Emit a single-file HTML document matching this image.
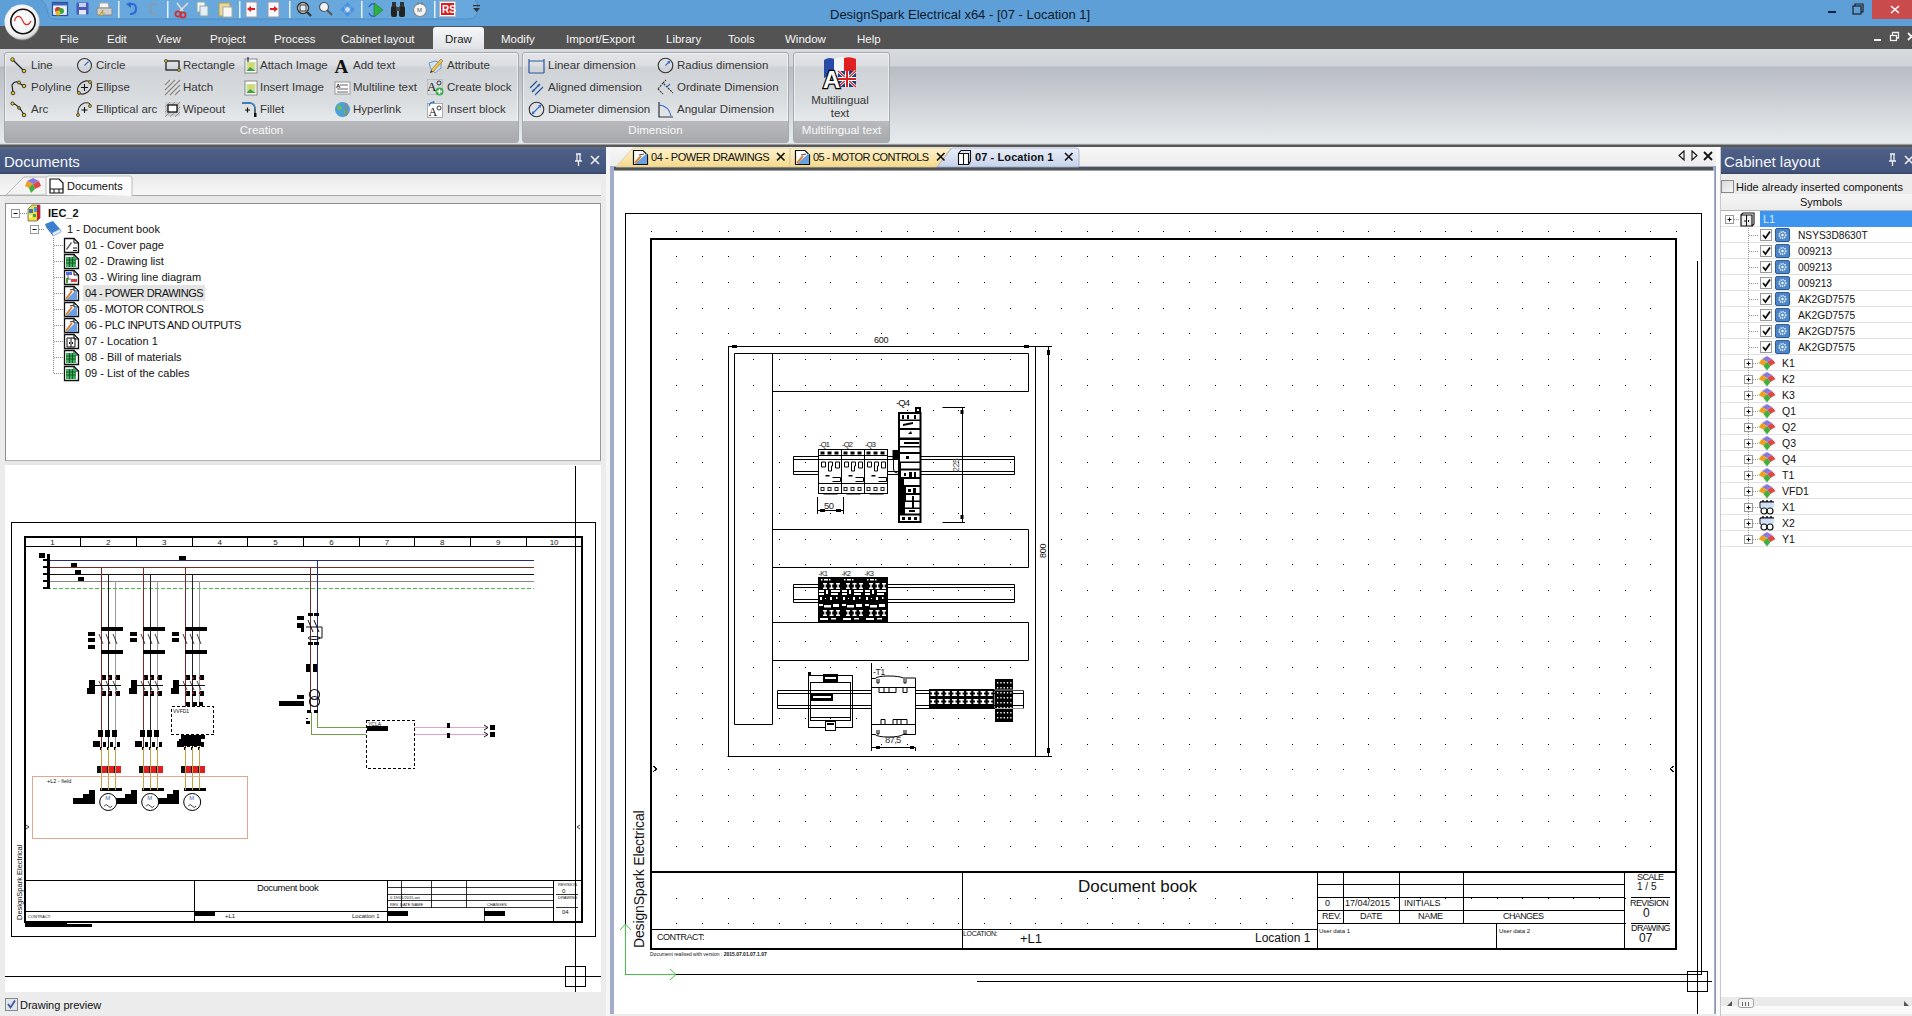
<!DOCTYPE html>
<html><head><meta charset="utf-8">
<style>
*{margin:0;padding:0;box-sizing:border-box}
html,body{width:1912px;height:1016px;overflow:hidden;background:#ececec;font-family:"Liberation Sans",sans-serif;font-size:12px;color:#000}
.a{position:absolute}
svg{position:absolute;overflow:visible}
#title{left:0;top:0;width:1912px;height:26px;background:#5f9fd7}
#menu{left:0;top:26px;width:1912px;height:23px;background:#535353;border-top:1px solid #4d5660}
.mi{position:absolute;top:33px;color:#f6f6f6;font-size:11.5px;line-height:13px;white-space:nowrap}
#ribbon{left:0;top:49px;width:1912px;height:96px;background:linear-gradient(#d7dadf 0,#d1d4da 17px,#b8bcc4 18px,#c9cdd2 45px,#e6ebed 93px,#d0d3d5 96px)}
.grp{position:absolute;top:52px;height:91px;border:1px solid #a6a9ad;border-radius:3px;background:linear-gradient(#e2e4e7 0,#dcdee1 12px,#cfd2d6 15px,#d9dcdf 45px,#e7eaec 70px);box-shadow:inset 0 0 0 1px rgba(255,255,255,.5)}
.glab{position:absolute;left:0;right:0;bottom:0;height:21px;background:linear-gradient(#b8babd,#a7a9ac);color:#f8f8f8;text-align:center;font-size:11.5px;line-height:18px}
.ri{position:absolute;font-size:11.5px;line-height:13px;color:#363636;white-space:nowrap}
.ic{position:absolute;width:17px;height:17px}
#sep{left:0;top:144px;width:1912px;height:3px;background:#575757;border-top:1px solid #9a9a9a}
.phdr{position:absolute;top:147px;height:27px;background:linear-gradient(#5a6a8c 0,#4e5f86 3px,#43557d 90%,#344463);color:#f4f6fa;font-size:15px;line-height:29px;padding-left:4px;white-space:nowrap}
.tr{position:absolute;font-size:11px;line-height:13px;white-space:nowrap;color:#111}
</style></head><body>
<!-- TITLE BAR -->
<div id="title" class="a"></div>

<svg width="450" height="22" style="left:40px;top:0">
 <path d="M1 -1 Q7 5 8 13 Q8.5 19 14 19 L428 19 Q438 19 438 9 Q438 2 434 -1 Z" fill="#68a8dd" stroke="#4f8ec6" stroke-width="1"/>
</svg>
<svg width="17" height="18" style="left:52px;top:1px"><rect x="0.5" y="1.5" width="15" height="13" fill="#e8f0f8" stroke="#2a50a0" stroke-width="1.2"/><rect x="1" y="2" width="15" height="2.5" fill="#3a64b8"/><circle cx="6" cy="9" r="3" fill="#d03030"/><circle cx="9" cy="10" r="3" fill="#40a040"/><circle cx="6" cy="12" r="2.5" fill="#e0c020"/></svg>
<svg width="14" height="18" style="left:76px;top:1px"><rect x="0.5" y="1.5" width="12" height="12" rx="1" fill="#4a58b8"/><rect x="3" y="2" width="7" height="4" fill="#c8d0f0"/><rect x="3" y="9" width="7" height="4.5" fill="#e8e8f0"/></svg>
<svg width="17" height="18" style="left:96px;top:1px"><path d="M4 2 L12 2 L13 7 L3 7Z" fill="#f4f4f4" stroke="#aaa"/><rect x="1" y="7" width="15" height="7" rx="1" fill="#cfcfcf" stroke="#888"/><path d="M3 15 L7 9 L6 12 L9 12" fill="#f0d020" stroke="#a08010" stroke-width=".6"/></svg>
<svg width="2" height="18" style="left:118px;top:1px"><rect x="0" y="0" width="1.5" height="17" fill="#e8f2fb"/></svg>
<svg width="12" height="18" style="left:126px;top:1px"><path d="M3 4 Q10 1 10 8 Q10 13 4 13" fill="none" stroke="#2a6ad0" stroke-width="2"/><path d="M0 3 L5 1 L5 7Z" fill="#2a6ad0"/></svg>
<svg width="12" height="18" style="left:148px;top:1px"><path d="M9 4 Q2 1 2 8 Q2 13 8 13" fill="none" stroke="#8a9aaa" stroke-width="2"/></svg>
<svg width="2" height="18" style="left:167px;top:1px"><rect x="0" y="0" width="1.5" height="17" fill="#e8f2fb"/></svg>
<svg width="15" height="18" style="left:174px;top:1px"><path d="M3 2 L9 10 M14 2 L6 10" stroke="#ddd" stroke-width="1.6"/><circle cx="4" cy="13" r="2.6" fill="none" stroke="#d03030" stroke-width="1.8"/><circle cx="9" cy="14" r="2.6" fill="none" stroke="#d03030" stroke-width="1.8"/></svg>
<svg width="13" height="18" style="left:196px;top:1px"><rect x="1" y="1" width="8" height="10" fill="#f4f4f4" stroke="#8aa"/><rect x="4" y="5" width="8" height="10" fill="#e4eef8" stroke="#8aa"/></svg>
<svg width="15" height="18" style="left:218px;top:1px"><rect x="1" y="2" width="11" height="13" fill="#e8d8a0" stroke="#b09a50"/><rect x="5" y="6" width="9" height="10" fill="#f8f8f0" stroke="#aaa"/></svg>
<svg width="2" height="18" style="left:239px;top:1px"><rect x="0" y="0" width="1.5" height="17" fill="#e8f2fb"/></svg>
<svg width="14" height="18" style="left:245px;top:1px"><rect x="1" y="1" width="11" height="15" fill="#fafafa" stroke="#99a"/><path d="M2 8 L6 5 V7 H10 V9 H6 V11Z" fill="#e02020"/></svg>
<svg width="14" height="18" style="left:267px;top:1px"><rect x="1" y="1" width="11" height="15" fill="#fafafa" stroke="#99a"/><path d="M11 8 L7 5 V7 H3 V9 H7 V11Z" fill="#e02020"/></svg>
<svg width="2" height="18" style="left:289px;top:1px"><rect x="0" y="0" width="1.5" height="17" fill="#e8f2fb"/></svg>
<svg width="16" height="18" style="left:296px;top:1px"><circle cx="7" cy="7" r="5.5" fill="#e8eef4" stroke="#333" stroke-width="1.4"/><path d="M11 11 L15 15" stroke="#333" stroke-width="2.2"/><rect x="4" y="4" width="6" height="6" fill="none" stroke="#333"/></svg>
<svg width="15" height="18" style="left:318px;top:1px"><circle cx="6" cy="6" r="4.5" fill="#eef2f6" stroke="#555" stroke-width="1.2"/><path d="M9 9 L14 14" stroke="#555" stroke-width="2"/></svg>
<svg width="17" height="18" style="left:339px;top:1px"><path d="M8.5 1 L12 5 H5Z M8.5 16 L12 12 H5Z M1 8.5 L5 5 V12Z M16 8.5 L12 5 V12Z" fill="#4a90e0"/><circle cx="8.5" cy="8.5" r="3" fill="#cde" stroke="#4a90e0"/></svg>
<svg width="2" height="18" style="left:361px;top:1px"><rect x="0" y="0" width="1.5" height="17" fill="#e8f2fb"/></svg>
<svg width="16" height="18" style="left:368px;top:1px"><path d="M6 2 L15 9 L6 16Z" fill="#30b040" stroke="#1a7020" stroke-width=".6"/><path d="M1 6 Q3 2 6 3 M1 12 Q3 16 6 15" fill="none" stroke="#2a6ad0" stroke-width="1.5"/></svg>
<svg width="16" height="18" style="left:390px;top:1px"><rect x="1" y="5" width="6" height="11" rx="2" fill="#222"/><rect x="9" y="5" width="6" height="11" rx="2" fill="#222"/><rect x="2" y="1" width="4" height="5" fill="#333"/><rect x="10" y="1" width="4" height="5" fill="#333"/><rect x="6" y="6" width="4" height="4" fill="#444"/></svg>
<svg width="16" height="18" style="left:412px;top:1px"><circle cx="8" cy="9" r="6.5" fill="#f4f4f4" stroke="#888" stroke-width="1.2"/><path d="M6 1 V4 M10 1 V4" stroke="#777" stroke-width="1.2"/><text x="5" y="11" font-size="6" fill="#555">M</text></svg>
<svg width="2" height="18" style="left:434px;top:1px"><rect x="0" y="0" width="1.5" height="17" fill="#e8f2fb"/></svg>
<svg width="18" height="18" style="left:439px;top:1px"><rect x="0.5" y="0.5" width="16" height="15" fill="#fff" stroke="#bbb"/><rect x="2" y="2" width="13" height="12" fill="#d82020"/><text x="3" y="12" font-family="Liberation Sans" font-weight="bold" font-size="10" fill="#fff">RS</text></svg>
<svg width="8" height="18" style="left:473px;top:1px"><rect x="0" y="4" width="7" height="1.2" fill="#333"/><path d="M0 7 L7 7 L3.5 11Z" fill="#333"/></svg>
<div class="a" style="left:830px;top:7px;font-size:13px;line-height:16px;color:#0e1a2a;white-space:nowrap">DesignSpark Electrical x64 - [07 - Location 1]</div>
<svg width="100" height="22" style="left:1812px;top:0">
 <rect x="16" y="11" width="8" height="2" fill="#0a2440"/>
 <rect x="41" y="6" width="8" height="8" fill="none" stroke="#222" stroke-width="1.2"/>
 <path d="M43 6 V4 H51 V12 H49" fill="none" stroke="#222" stroke-width="1.2"/>
 <rect x="60" y="0" width="40" height="19" fill="#c94b4b"/>
 <path d="M79 6 L87 13 M87 6 L79 13" stroke="#fff" stroke-width="1.6"/>
</svg>
<!-- MENU -->
<div id="menu" class="a"></div>
<div class="a" style="left:433px;top:27px;width:51px;height:23px;background:linear-gradient(#f6f7f9,#dfe1e5);border-radius:3px 3px 0 0"></div>
<div class="mi" style="left:60px">File</div>
<div class="mi" style="left:107px">Edit</div>
<div class="mi" style="left:156px">View</div>
<div class="mi" style="left:210px">Project</div>
<div class="mi" style="left:274px">Process</div>
<div class="mi" style="left:341px">Cabinet layout</div>
<div class="mi" style="left:445px;color:#222">Draw</div>
<div class="mi" style="left:501px">Modify</div>
<div class="mi" style="left:566px">Import/Export</div>
<div class="mi" style="left:666px">Library</div>
<div class="mi" style="left:728px">Tools</div>
<div class="mi" style="left:785px">Window</div>
<div class="mi" style="left:857px">Help</div>
<svg width="50" height="16" style="left:1870px;top:30px">
 <rect x="4" y="9" width="7" height="2" fill="#f0f0f0"/>
 <rect x="20.5" y="5.5" width="6" height="5" fill="none" stroke="#f0f0f0" stroke-width="1.3"/>
 <path d="M22.5 5 V2.5 H28.5 V8 H26.5" fill="none" stroke="#f0f0f0" stroke-width="1.3"/>
 <path d="M38 3 L45 10 M45 3 L38 10" stroke="#f0f0f0" stroke-width="1.8"/>
</svg>
<svg width="80" height="50" style="left:0;top:0">
 <defs><radialGradient id="lg" cx="45%" cy="40%" r="60%"><stop offset="0" stop-color="#fff"/><stop offset="0.8" stop-color="#f2f2f2"/><stop offset="1" stop-color="#cfcfcf"/></radialGradient></defs>
 <circle cx="22.5" cy="23" r="17.5" fill="#9a9a9a" opacity=".45"/>
 <circle cx="22" cy="22" r="17.5" fill="url(#lg)"/>
 <circle cx="23" cy="21.5" r="12.2" fill="none" stroke="#111" stroke-width="1.6"/>
 <path d="M14.5 21 C16.5 14.5 20.5 15.5 22.5 20.5 C24.5 25.5 28.5 26.5 31 21" fill="none" stroke="#d03030" stroke-width="1.2"/>
</svg>
<!-- RIBBON -->
<div id="ribbon" class="a"></div>
<div class="grp" style="left:4px;width:515px"><div class="glab">Creation</div></div>
<div class="grp" style="left:522px;width:267px"><div class="glab">Dimension</div></div>
<div class="grp" style="left:793px;width:97px"><div class="glab">Multilingual text</div></div>
<svg width="17" height="17" style="left:10px;top:57px"><path d="M2 2 L14 14" stroke="#222" stroke-width="1.2"/><circle cx="2.5" cy="2.5" r="1.8" fill="#f0c020" stroke="#222" stroke-width=".8"/><circle cx="14" cy="14" r="1.8" fill="#f0c020" stroke="#222" stroke-width=".8"/></svg><div class="ri" style="left:31px;top:59px">Line</div>
<svg width="17" height="17" style="left:10px;top:79px"><path d="M3 14 L2 6 Q5 1 9 4 L14 7" fill="none" stroke="#222" stroke-width="1.2"/><circle cx="3" cy="14" r="1.8" fill="#f0c020" stroke="#222" stroke-width=".8"/><circle cx="14" cy="7" r="1.8" fill="#f0c020" stroke="#222" stroke-width=".8"/><circle cx="9" cy="3.5" r="1.5" fill="#f0c020" stroke="#222" stroke-width=".8"/></svg><div class="ri" style="left:31px;top:81px">Polyline</div>
<svg width="17" height="17" style="left:10px;top:101px"><path d="M2 2 Q9 4 14 14" fill="none" stroke="#222" stroke-width="1.2"/><circle cx="2.5" cy="2.5" r="1.6" fill="#f0c020" stroke="#222" stroke-width=".8"/><circle cx="14" cy="14" r="1.8" fill="#f0c020" stroke="#222" stroke-width=".8"/><circle cx="9" cy="7" r="1.4" fill="#f0c020" stroke="#222" stroke-width=".8"/></svg><div class="ri" style="left:31px;top:103px">Arc</div>
<svg width="17" height="17" style="left:76px;top:57px"><circle cx="8.5" cy="8.5" r="7" fill="none" stroke="#333" stroke-width="1.1"/><path d="M8.5 8.5 L12.5 4.5" stroke="#2b6fd0" stroke-width="1.1"/></svg><div class="ri" style="left:96px;top:59px">Circle</div>
<svg width="17" height="17" style="left:76px;top:79px"><ellipse cx="8.5" cy="8.5" rx="8" ry="5.5" transform="rotate(-40 8.5 8.5)" fill="none" stroke="#333" stroke-width="1.1"/><path d="M8.5 5 V12 M5 8.5 H12" stroke="#111" stroke-width="1.1"/><circle cx="3" cy="14" r="1.5" fill="#f0c020" stroke="#222" stroke-width=".7"/><circle cx="14" cy="3" r="1.5" fill="#f0c020" stroke="#222" stroke-width=".7"/></svg><div class="ri" style="left:96px;top:81px">Ellipse</div>
<svg width="17" height="17" style="left:76px;top:101px"><path d="M2 14 Q1 5 8 2 Q14 1 14 4" fill="none" stroke="#333" stroke-width="1.1"/><path d="M8.5 6 V12 M5.5 9 H11.5" stroke="#111" stroke-width="1.1"/><circle cx="2" cy="14" r="1.5" fill="#f0c020" stroke="#222" stroke-width=".7"/><circle cx="14" cy="5" r="1.5" fill="#f0c020" stroke="#222" stroke-width=".7"/></svg><div class="ri" style="left:96px;top:103px">Elliptical arc</div>
<svg width="17" height="17" style="left:164px;top:57px"><rect x="2" y="4" width="13" height="9" fill="none" stroke="#222" stroke-width="1.3"/><circle cx="2" cy="4" r="1.5" fill="#f0c020" stroke="#222" stroke-width=".7"/><circle cx="15" cy="13" r="1.5" fill="#f0c020" stroke="#222" stroke-width=".7"/></svg><div class="ri" style="left:183px;top:59px">Rectangle</div>
<svg width="17" height="17" style="left:164px;top:79px"><rect x="1" y="1" width="15" height="14" fill="#ddd"/><path d="M1 6 L6 1 M1 11 L11 1 M1 16 L16 1 M6 16 L16 6 M11 16 L16 11" stroke="#888" stroke-width="1.2"/></svg><div class="ri" style="left:183px;top:81px">Hatch</div>
<svg width="17" height="17" style="left:164px;top:101px"><rect x="1" y="1" width="15" height="14" fill="#ccc"/><path d="M1 6 L6 1 M1 11 L11 1 M1 16 L16 1 M6 16 L16 6 M11 16 L16 11" stroke="#999" stroke-width="1"/><rect x="4" y="4" width="9" height="7" fill="#fff" stroke="#111" stroke-width="1.3"/></svg><div class="ri" style="left:183px;top:103px">Wipeout</div>
<svg width="17" height="17" style="left:242px;top:57px"><rect x="3" y="2" width="12" height="14" fill="#fff" stroke="#888"/><rect x="4.5" y="5" width="9" height="9" fill="#bfe0a0"/><circle cx="9" cy="8" r="2" fill="#f0d040"/><path d="M4.5 14 L8 10 L13.5 14Z" fill="#4a9a40"/><path d="M6 0 V5" stroke="#333" stroke-width="1.3"/></svg><div class="ri" style="left:260px;top:59px">Attach Image</div>
<svg width="17" height="17" style="left:242px;top:79px"><rect x="3" y="2" width="12" height="14" fill="#fff" stroke="#888"/><rect x="4.5" y="5" width="9" height="9" fill="#bfe0a0"/><circle cx="9" cy="8" r="2" fill="#f0d040"/><path d="M4.5 14 L8 10 L13.5 14Z" fill="#4a9a40"/></svg><div class="ri" style="left:260px;top:81px">Insert Image</div>
<svg width="17" height="17" style="left:241px;top:101px"><path d="M1 2 H8 Q14 2 14 8 V16" fill="none" stroke="#222" stroke-width="1.3"/><path d="M1 2 H8 Q14 2 14 8" fill="none" stroke="#3a8ad8" stroke-width="1.3"/><path d="M4 9 H9 M6.5 6.5 V11.5" stroke="#111" stroke-width="1.2"/><rect x="13" y="12" width="2.5" height="4" fill="#111"/></svg><div class="ri" style="left:260px;top:103px">Fillet</div>
<svg width="17" height="17" style="left:334px;top:57px"><text x="0.5" y="15.5" font-family="Liberation Serif" font-size="19" font-weight="bold" fill="#111">A</text></svg><div class="ri" style="left:353px;top:59px">Add text</div>
<svg width="17" height="17" style="left:334px;top:79px"><rect x="1" y="3" width="15" height="12" fill="#fff" stroke="#999"/><text x="2" y="9" font-size="6" font-weight="bold" fill="#111">A</text><path d="M6 6 H14 M3 10 H14 M3 13 H14" stroke="#666"/></svg><div class="ri" style="left:353px;top:81px">Multiline text</div>
<svg width="17" height="17" style="left:334px;top:101px"><circle cx="8.5" cy="8.5" r="7.5" fill="#4aa0d8"/><path d="M3 5 Q6 3 8 6 Q7 10 4 9Z M10 9 Q13 8 14 11 Q12 15 10 13Z" fill="#6cc050"/><path d="M12 2 V15" stroke="#888" stroke-width="2"/></svg><div class="ri" style="left:353px;top:103px">Hyperlink</div>
<svg width="17" height="17" style="left:427px;top:57px"><path d="M2 6 L8 4 L14 6 L14 11 Q8 16 8 16 Q2 11 2 6Z" fill="#cfe3f5" stroke="#6f94b8"/><path d="M4 13 L14 2 L16 4 L6 15 Z" fill="#f2c24a" stroke="#8a6a2a" stroke-width=".6"/><path d="M4 13 L3 16 L6 15Z" fill="#333"/></svg><div class="ri" style="left:447px;top:59px">Attribute</div>
<svg width="17" height="17" style="left:427px;top:79px"><text x="0" y="12" font-family="Liberation Serif" font-size="13" fill="#111">A</text><circle cx="12" cy="4" r="2" fill="none" stroke="#111" stroke-width=".8"/><rect x="0.5" y="0.5" width="15" height="15" fill="none" stroke="#aaa" stroke-width=".6"/><circle cx="12.5" cy="12.5" r="4" fill="#3aae4a"/><path d="M12.5 10 V15 M10 12.5 H15" stroke="#fff" stroke-width="1.4"/></svg><div class="ri" style="left:447px;top:81px">Create block</div>
<svg width="17" height="17" style="left:427px;top:101px"><rect x="0.5" y="2.5" width="15" height="14" fill="#fff" stroke="#999" stroke-width=".8"/><text x="1.5" y="15" font-family="Liberation Serif" font-size="12" fill="#111">A</text><circle cx="12" cy="7" r="2" fill="none" stroke="#111" stroke-width=".8"/><path d="M2 5 Q3 1 7 1" fill="none" stroke="#2a70c8" stroke-width="1.2"/><path d="M6 0 L8 1 L6 3" fill="#2a70c8"/></svg><div class="ri" style="left:447px;top:103px">Insert block</div>
<svg width="17" height="17" style="left:528px;top:57px"><path d="M1 2 V16 M16 2 V16 M1 16 H16 M1 4 H16" stroke="#2a5aa0" stroke-width="1.2" fill="none"/></svg><div class="ri" style="left:548px;top:59px">Linear dimension</div>
<svg width="17" height="17" style="left:528px;top:79px"><path d="M2 9 L9 2 M7 16 L15 8 M4 13 L12 5" stroke="#2a5aa0" stroke-width="1.2" fill="none"/><path d="M4 13 L5 10 L7 12Z M12 5 L11 8 L9 6Z" fill="#2a5aa0"/></svg><div class="ri" style="left:548px;top:81px">Aligned dimension</div>
<svg width="17" height="17" style="left:528px;top:101px"><circle cx="8.5" cy="8.5" r="7.3" fill="none" stroke="#333" stroke-width="1.1"/><path d="M4 13 L13 4" stroke="#2a6ad0" stroke-width="1.1"/><path d="M4 13 L4.5 10 L7 12.5Z M13 4 L12.5 7 L10 4.5Z" fill="#2a6ad0"/></svg><div class="ri" style="left:548px;top:103px">Diameter dimension</div>
<svg width="17" height="17" style="left:657px;top:57px"><circle cx="8.5" cy="8.5" r="7.3" fill="none" stroke="#333" stroke-width="1.1"/><path d="M8.5 8.5 L12.5 4.5" stroke="#2a6ad0" stroke-width="1.1"/><path d="M13 4 L12.5 7 L10 4.5Z" fill="#2a6ad0"/></svg><div class="ri" style="left:677px;top:59px">Radius dimension</div>
<svg width="17" height="17" style="left:657px;top:79px"><path d="M1 10 L6 4 L16 14 M6 4 L9 1 M1 10 L6 15" stroke="#333" stroke-width="1.1" fill="none" stroke-dasharray="2 1"/><path d="M10 8 L13 5" stroke="#2a6ad0" stroke-width="1.1"/></svg><div class="ri" style="left:677px;top:81px">Ordinate Dimension</div>
<svg width="17" height="17" style="left:657px;top:101px"><path d="M2 1 V16 H16" stroke="#333" stroke-width="1.2" fill="none"/><path d="M2 4 Q12 5 14 15" stroke="#2a6ad0" stroke-width="1.1" fill="none"/></svg><div class="ri" style="left:677px;top:103px">Angular Dimension</div>
<svg width="40" height="36" style="left:822px;top:56px">
<path d="M2 4 Q8 0 14 4 L14 22 Q8 18 2 22Z" fill="#2a4aa8"/><path d="M12 3 Q20 -1 28 3 L28 20 Q20 16 12 20Z" fill="#f4f4f4"/><path d="M22 2 Q28 0 34 3 L34 18 Q28 15 22 18Z" fill="#e02020"/>
<rect x="16" y="15" width="18" height="16" fill="#1a3a8a"/><path d="M16 15 L34 31 M34 15 L16 31" stroke="#fff" stroke-width="3"/><path d="M16 15 L34 31 M34 15 L16 31" stroke="#d02020" stroke-width="1.2"/><path d="M25 15 V31 M16 23 H34" stroke="#fff" stroke-width="4"/><path d="M25 15 V31 M16 23 H34" stroke="#d02020" stroke-width="2"/>
<text x="1" y="32" font-family="Liberation Sans" font-size="24" font-weight="bold" fill="#fff" stroke="#000" stroke-width="2.4" paint-order="stroke">A</text></svg>
<div class="ri" style="left:808px;top:94px;width:64px;text-align:center;line-height:13px">Multilingual<br>text</div>
<div id="sep" class="a"></div>
<div class="a" style="left:0;top:147px;width:610px;height:869px;background:#ececec"></div>
<div class="phdr" style="left:0;width:606px">Documents</div>
<svg width="30" height="16" style="left:568px;top:152px"><path d="M8 2 H13 M9 2 V9 H12 V2 M7 9 H14 M10.5 9 V14" stroke="#f0f0f0" stroke-width="1.3" fill="none"/><path d="M23 4 L31 12 M31 4 L23 12" stroke="#f0f0f0" stroke-width="1.6"/></svg>
<div class="a" style="left:0;top:174px;width:606px;height:22px;background:linear-gradient(#e9e9e9,#f7f7f7);border-bottom:1px solid #a9a9a9"></div>
<svg width="140" height="24" style="left:0;top:174px"><path d="M6 21 L24 3 H50 L50 21Z" fill="#f3f3f3" stroke="#b8b8b8"/><path d="M46 21 V4 Q46 2 49 2 H130 Q132 2 132 5 V22" fill="#fbfbfb" stroke="#bdbdbd"/><g transform="translate(25,4)"><path d="M8 0 L14 3 L8 6 L2 3Z" fill="#8a7ae0"/><path d="M14 3 L16 8 L10 11 L8 6Z" fill="#e04848"/><path d="M2 3 L8 6 L6 11 L0 8Z" fill="#f0a020"/><path d="M8 6 L10 11 L6 15 L4 10Z" fill="#40b040"/></g><g transform="translate(49,4)"><path d="M1 1 H10 L14 5 V15 H1Z" fill="#fff" stroke="#111" stroke-width="1.2"/><path d="M1 11 H14 M5 11 V15 M10 11 V15" stroke="#111" stroke-width="1"/></g></svg>
<div class="tr" style="left:67px;top:180px">Documents</div>
<div class="a" style="left:5px;top:196px;width:596px;height:7px;background:#e8e8e8"></div>
<div class="a" style="left:5px;top:203px;width:596px;height:258px;background:#fff;border:1px solid #8e8e8e;border-right-color:#9a9a9a;border-bottom-color:#b0b0b0"></div>
<div class="a" style="left:5px;top:461px;width:596px;height:4px;background:#e6e6e6"></div>
<svg width="100" height="180" style="left:0;top:200px"><rect x="11.5" y="9.5" width="8" height="8" fill="#fff" stroke="#999"/><path d="M13.5 13.5 H17.5" stroke="#111"/><path d="M20 13.5 H27" stroke="#888" stroke-dasharray="1 1"/><rect x="30.5" y="25.5" width="8" height="8" fill="#fff" stroke="#999"/><path d="M32.5 29.5 H36.5" stroke="#111"/><path d="M39 29.5 H45" stroke="#888" stroke-dasharray="1 1"/><path d="M53.5 38 V173.5" stroke="#888" stroke-dasharray="1 1"/><path d="M54 45.5 H63" stroke="#888" stroke-dasharray="1 1"/><path d="M54 61.5 H63" stroke="#888" stroke-dasharray="1 1"/><path d="M54 77.5 H63" stroke="#888" stroke-dasharray="1 1"/><path d="M54 93.5 H63" stroke="#888" stroke-dasharray="1 1"/><path d="M54 109.5 H63" stroke="#888" stroke-dasharray="1 1"/><path d="M54 125.5 H63" stroke="#888" stroke-dasharray="1 1"/><path d="M54 141.5 H63" stroke="#888" stroke-dasharray="1 1"/><path d="M54 157.5 H63" stroke="#888" stroke-dasharray="1 1"/><path d="M54 173.5 H63" stroke="#888" stroke-dasharray="1 1"/><g transform="translate(28,5)"><path d="M0 4 L4 0 H12 V13 L9 16 H0Z" fill="#f0e040" stroke="#333" stroke-width=".6"/><rect x="1" y="4" width="4" height="4" fill="#3a70d0"/><rect x="6" y="2" width="5" height="5" fill="#3aa0e0"/><path d="M9 0 H12 V13 L9 16Z" fill="#c82030"/><rect x="1" y="10" width="3" height="3" fill="#f8f8a0"/><rect x="5" y="9" width="3" height="3" fill="#40a050"/></g><g transform="translate(45,21)"><path d="M0 3 L8 0 L15 8 L7 12Z" fill="#3a80d0"/><path d="M7 12 L15 8 L16 11 L8 15Z" fill="#e8eef8" stroke="#5a8ad0" stroke-width=".6"/><path d="M0 3 L7 12 L8 15 L1 6Z" fill="#2a60b0"/></g></svg>
<div class="a" style="left:83px;top:285px;width:122px;height:16px;background:#e4e4e4"></div>
<div class="tr" style="left:48px;top:207px;font-weight:bold">IEC_2</div>
<div class="tr" style="left:67px;top:223px">1 - Document book</div>
<svg width="17" height="17" style="left:63px;top:237px"><path d="M1.5 1.5 H11 L15.5 6 V15.5 H1.5Z" fill="#fff" stroke="#111" stroke-width="1.3" stroke-linejoin="miter"/><path d="M11 1.5 V6 H15.5" fill="none" stroke="#111" stroke-width="1"/><path d="M3 12 L8 5 L9 6 L4 13Z" fill="#555"/><path d="M10 11 H14 M10 13.5 H14" stroke="#111"/></svg>
<div class="tr" style="left:85px;top:239px;">01 - Cover page</div>
<svg width="17" height="17" style="left:63px;top:253px"><path d="M1.5 1.5 H11 L15.5 6 V15.5 H1.5Z" fill="#fff" stroke="#111" stroke-width="1.3" stroke-linejoin="miter"/><path d="M11 1.5 V6 H15.5" fill="none" stroke="#111" stroke-width="1"/><rect x="3" y="4" width="10" height="10" fill="#3cae5a"/><path d="M3 7 H13 M3 10 H13 M6.5 4 V14 M9.5 4 V14" stroke="#0d4a20" stroke-width=".8"/></svg>
<div class="tr" style="left:85px;top:255px;">02 - Drawing list</div>
<svg width="17" height="17" style="left:63px;top:269px"><path d="M1.5 1.5 H11 L15.5 6 V15.5 H1.5Z" fill="#fff" stroke="#111" stroke-width="1.3" stroke-linejoin="miter"/><path d="M11 1.5 V6 H15.5" fill="none" stroke="#111" stroke-width="1"/><rect x="3" y="3" width="6" height="3" fill="#5a6ad8"/><rect x="8" y="10" width="6" height="3" fill="#e04040"/><rect x="3" y="9" width="2" height="5" fill="#40a040"/><path d="M5 6 V10 H8" stroke="#333" fill="none" stroke-width=".8"/></svg>
<div class="tr" style="left:85px;top:271px;">03 - Wiring line diagram</div>
<svg width="17" height="17" style="left:63px;top:285px"><path d="M1.5 1.5 H11 L15.5 6 V15.5 H1.5Z" fill="#fff" stroke="#111" stroke-width="1.3" stroke-linejoin="miter"/><path d="M11 1.5 V6 H15.5" fill="none" stroke="#111" stroke-width="1"/><path d="M3 15 L14 4 V15Z" fill="#6aa0e0"/><path d="M3 14 L9 6" stroke="#e08030" stroke-width="2"/><path d="M7 5 L11 4" stroke="#333" stroke-width="1.2"/></svg>
<div class="tr" style="left:85px;top:287px; letter-spacing:-0.45px">04 - POWER DRAWINGS</div>
<svg width="17" height="17" style="left:63px;top:301px"><path d="M1.5 1.5 H11 L15.5 6 V15.5 H1.5Z" fill="#fff" stroke="#111" stroke-width="1.3" stroke-linejoin="miter"/><path d="M11 1.5 V6 H15.5" fill="none" stroke="#111" stroke-width="1"/><path d="M3 15 L14 4 V15Z" fill="#6aa0e0"/><path d="M3 14 L9 6" stroke="#e08030" stroke-width="2"/><path d="M7 5 L11 4" stroke="#333" stroke-width="1.2"/></svg>
<div class="tr" style="left:85px;top:303px; letter-spacing:-0.45px">05 - MOTOR CONTROLS</div>
<svg width="17" height="17" style="left:63px;top:317px"><path d="M1.5 1.5 H11 L15.5 6 V15.5 H1.5Z" fill="#fff" stroke="#111" stroke-width="1.3" stroke-linejoin="miter"/><path d="M11 1.5 V6 H15.5" fill="none" stroke="#111" stroke-width="1"/><path d="M3 15 L14 4 V15Z" fill="#6aa0e0"/><path d="M3 14 L9 6" stroke="#e08030" stroke-width="2"/><path d="M7 5 L11 4" stroke="#333" stroke-width="1.2"/></svg>
<div class="tr" style="left:85px;top:319px; letter-spacing:-0.45px">06 - PLC INPUTS AND OUTPUTS</div>
<svg width="17" height="17" style="left:63px;top:333px"><path d="M1.5 1.5 H11 L15.5 6 V15.5 H1.5Z" fill="#fff" stroke="#111" stroke-width="1.3" stroke-linejoin="miter"/><path d="M11 1.5 V6 H15.5" fill="none" stroke="#111" stroke-width="1"/><path d="M4 5 H12 V14 H4Z M8 5 V14" fill="none" stroke="#111" stroke-width="1"/><rect x="6" y="9" width="1" height="2" fill="#111"/><rect x="9" y="9" width="1" height="2" fill="#111"/></svg>
<div class="tr" style="left:85px;top:335px;">07 - Location 1</div>
<svg width="17" height="17" style="left:63px;top:349px"><path d="M1.5 1.5 H11 L15.5 6 V15.5 H1.5Z" fill="#fff" stroke="#111" stroke-width="1.3" stroke-linejoin="miter"/><path d="M11 1.5 V6 H15.5" fill="none" stroke="#111" stroke-width="1"/><rect x="3" y="4" width="10" height="10" fill="#3cae5a"/><path d="M3 7 H13 M3 10 H13 M6.5 4 V14 M9.5 4 V14" stroke="#0d4a20" stroke-width=".8"/></svg>
<div class="tr" style="left:85px;top:351px;">08 - Bill of materials</div>
<svg width="17" height="17" style="left:63px;top:365px"><path d="M1.5 1.5 H11 L15.5 6 V15.5 H1.5Z" fill="#fff" stroke="#111" stroke-width="1.3" stroke-linejoin="miter"/><path d="M11 1.5 V6 H15.5" fill="none" stroke="#111" stroke-width="1"/><rect x="3" y="4" width="10" height="10" fill="#3cae5a"/><path d="M3 7 H13 M3 10 H13 M6.5 4 V14 M9.5 4 V14" stroke="#0d4a20" stroke-width=".8"/></svg>
<div class="tr" style="left:85px;top:367px;">09 - List of the cables</div>
<div class="a" style="left:5px;top:465px;width:596px;height:527px;background:#fff"></div>
<div class="a" style="left:5px;top:465px;width:596px;height:527px;overflow:hidden">
<svg width="1912" height="1016" style="left:-5px;top:-465px">
<g fill="none" stroke="#000" shape-rendering="crispEdges">
<rect x="11.5" y="522.5" width="584" height="414"/>
<rect x="25" y="537" width="557" height="385" stroke-width="2"/>
<path d="M25 546.5 H582"/>
<path d="M80.2 537 V546.5 M136.3 537 V546.5 M192.0 537 V546.5 M247.6 537 V546.5 M303.5 537 V546.5 M359.8 537 V546.5 M414.1 537 V546.5 M470.3 537 V546.5 M526.3 537 V546.5 "/>
<path d="M575.5 466 V992 M5 976.5 H601"/><rect x="565.5" y="966.5" width="20" height="20"/>
</g>
<text x="52.6" y="545" font-size="8" font-family="Liberation Sans" fill="#222" text-anchor="middle">1</text>
<text x="108.2" y="545" font-size="8" font-family="Liberation Sans" fill="#222" text-anchor="middle">2</text>
<text x="164.2" y="545" font-size="8" font-family="Liberation Sans" fill="#222" text-anchor="middle">3</text>
<text x="219.8" y="545" font-size="8" font-family="Liberation Sans" fill="#222" text-anchor="middle">4</text>
<text x="275.6" y="545" font-size="8" font-family="Liberation Sans" fill="#222" text-anchor="middle">5</text>
<text x="331.6" y="545" font-size="8" font-family="Liberation Sans" fill="#222" text-anchor="middle">6</text>
<text x="387.0" y="545" font-size="8" font-family="Liberation Sans" fill="#222" text-anchor="middle">7</text>
<text x="442.2" y="545" font-size="8" font-family="Liberation Sans" fill="#222" text-anchor="middle">8</text>
<text x="498.3" y="545" font-size="8" font-family="Liberation Sans" fill="#222" text-anchor="middle">9</text>
<text x="554.1" y="545" font-size="8" font-family="Liberation Sans" fill="#222" text-anchor="middle">10</text>
<g shape-rendering="crispEdges">
<path d="M47 560.5 H534" stroke="#2a2a7a"/><path d="M47 567.5 H534" stroke="#7a2a2a"/><path d="M47 574.5 H534" stroke="#111"/><path d="M47 581.5 H534" stroke="#888"/><path d="M47 588.5 H534" stroke="#40c040" stroke-dasharray="4 2"/>
<path d="M101.5 567 V785" stroke="#7a2a2a"/><path d="M108.5 574 V785" stroke="#222"/><path d="M115.5 581 V785" stroke="#999"/>
<path d="M143.5 567 V785" stroke="#7a2a2a"/><path d="M150.5 574 V785" stroke="#222"/><path d="M157.5 581 V785" stroke="#999"/>
<path d="M185.5 567 V785" stroke="#7a2a2a"/><path d="M192.5 574 V785" stroke="#222"/><path d="M199.5 581 V785" stroke="#999"/>
<path d="M310.5 567 V712" stroke="#7a2a2a" fill="none"/><path d="M317.5 560 V717" stroke="#2a2a7a"/>
<path d="M311 712 V734.5 H366 M317 712 V727.5 H366" stroke="#70a040" fill="none"/>
<path d="M414 727.5 H488 M414 734.5 H488" stroke="#e0a0d0"/>
</g>
<g fill="#000" shape-rendering="crispEdges">
<rect x="39" y="553" width="6" height="5"/><rect x="47" y="554" width="3" height="35"/>
<rect x="43" y="559" width="5" height="2"/>
<rect x="43" y="566" width="5" height="2"/>
<rect x="43" y="573" width="5" height="2"/>
<rect x="43" y="580" width="5" height="2"/>
<rect x="43" y="587" width="5" height="2"/>
<rect x="71" y="563" width="6" height="4"/><rect x="75" y="570" width="6" height="4"/><rect x="78" y="577" width="6" height="4"/><rect x="179" y="556" width="7" height="4"/>
<rect x="101" y="627" width="22" height="4"/><rect x="101" y="650" width="22" height="4"/>
<rect x="88" y="632" width="7" height="4"/><rect x="88" y="638" width="7" height="4"/><rect x="88" y="645" width="7" height="4"/>
<path d="M87 688 h2 v-8 h6 v14 h-8z"/>
<rect x="102" y="675" width="4" height="5"/><rect x="102" y="691" width="4" height="5"/><rect x="101" y="677" width="2" height="2" fill="#8a1a1a"/><rect x="101" y="692" width="2" height="2" fill="#8a1a1a"/>
<rect x="108" y="675" width="4" height="5"/><rect x="108" y="691" width="4" height="5"/><rect x="108" y="677" width="2" height="2" fill="#8a1a1a"/><rect x="108" y="692" width="2" height="2" fill="#8a1a1a"/>
<rect x="116" y="675" width="4" height="5"/><rect x="116" y="691" width="4" height="5"/><rect x="115" y="677" width="2" height="2" fill="#8a1a1a"/><rect x="115" y="692" width="2" height="2" fill="#8a1a1a"/>
<rect x="95" y="685" width="26" height="1" fill="#111"/>
<rect x="98" y="730" width="5" height="7"/><rect x="103" y="742" width="3" height="5"/><rect x="100" y="747" width="2" height="3"/>
<rect x="105" y="730" width="5" height="7"/><rect x="110" y="742" width="3" height="5"/><rect x="107" y="747" width="2" height="3"/>
<rect x="112" y="730" width="5" height="7"/><rect x="117" y="742" width="3" height="5"/><rect x="114" y="747" width="2" height="3"/>
<rect x="93" y="741" width="7" height="6"/>
<rect x="97" y="766" width="24" height="7" fill="#111"/><rect x="102" y="766" width="5" height="7" fill="#e02020"/><rect x="109" y="766" width="5" height="7" fill="#e02020"/><rect x="116" y="766" width="5" height="7" fill="#e02020"/>
<rect x="100" y="788" width="22" height="3"/>
<path d="M73 798 h10 v-4 h6 v-4 h6 v14 h-22z"/>
<rect x="143" y="627" width="22" height="4"/><rect x="143" y="650" width="22" height="4"/>
<rect x="130" y="632" width="7" height="4"/><rect x="130" y="638" width="7" height="4"/>
<path d="M129 688 h2 v-8 h6 v14 h-8z"/>
<rect x="144" y="675" width="4" height="5"/><rect x="144" y="691" width="4" height="5"/><rect x="143" y="677" width="2" height="2" fill="#8a1a1a"/><rect x="143" y="692" width="2" height="2" fill="#8a1a1a"/>
<rect x="150" y="675" width="4" height="5"/><rect x="150" y="691" width="4" height="5"/><rect x="150" y="677" width="2" height="2" fill="#8a1a1a"/><rect x="150" y="692" width="2" height="2" fill="#8a1a1a"/>
<rect x="158" y="675" width="4" height="5"/><rect x="158" y="691" width="4" height="5"/><rect x="157" y="677" width="2" height="2" fill="#8a1a1a"/><rect x="157" y="692" width="2" height="2" fill="#8a1a1a"/>
<rect x="137" y="685" width="26" height="1" fill="#111"/>
<rect x="140" y="730" width="5" height="7"/><rect x="145" y="742" width="3" height="5"/><rect x="142" y="747" width="2" height="3"/>
<rect x="147" y="730" width="5" height="7"/><rect x="152" y="742" width="3" height="5"/><rect x="149" y="747" width="2" height="3"/>
<rect x="154" y="730" width="5" height="7"/><rect x="159" y="742" width="3" height="5"/><rect x="156" y="747" width="2" height="3"/>
<rect x="135" y="741" width="7" height="6"/>
<rect x="139" y="766" width="24" height="7" fill="#111"/><rect x="144" y="766" width="5" height="7" fill="#e02020"/><rect x="151" y="766" width="5" height="7" fill="#e02020"/><rect x="158" y="766" width="5" height="7" fill="#e02020"/>
<rect x="142" y="788" width="22" height="3"/>
<path d="M115 798 h10 v-4 h6 v-4 h6 v14 h-22z"/>
<rect x="185" y="627" width="22" height="4"/><rect x="185" y="650" width="22" height="4"/>
<rect x="172" y="632" width="7" height="4"/><rect x="172" y="638" width="7" height="4"/>
<path d="M171 688 h2 v-8 h6 v14 h-8z"/>
<rect x="186" y="675" width="4" height="5"/><rect x="186" y="691" width="4" height="5"/><rect x="185" y="677" width="2" height="2" fill="#8a1a1a"/><rect x="185" y="692" width="2" height="2" fill="#8a1a1a"/>
<rect x="192" y="675" width="4" height="5"/><rect x="192" y="691" width="4" height="5"/><rect x="192" y="677" width="2" height="2" fill="#8a1a1a"/><rect x="192" y="692" width="2" height="2" fill="#8a1a1a"/>
<rect x="200" y="675" width="4" height="5"/><rect x="200" y="691" width="4" height="5"/><rect x="199" y="677" width="2" height="2" fill="#8a1a1a"/><rect x="199" y="692" width="2" height="2" fill="#8a1a1a"/>
<rect x="179" y="685" width="26" height="1" fill="#111"/>
<rect x="182" y="730" width="5" height="7"/><rect x="187" y="742" width="3" height="5"/><rect x="184" y="747" width="2" height="3"/>
<rect x="189" y="730" width="5" height="7"/><rect x="194" y="742" width="3" height="5"/><rect x="191" y="747" width="2" height="3"/>
<rect x="196" y="730" width="5" height="7"/><rect x="201" y="742" width="3" height="5"/><rect x="198" y="747" width="2" height="3"/>
<rect x="177" y="741" width="7" height="6"/>
<rect x="181" y="766" width="24" height="7" fill="#111"/><rect x="186" y="766" width="5" height="7" fill="#e02020"/><rect x="193" y="766" width="5" height="7" fill="#e02020"/><rect x="200" y="766" width="5" height="7" fill="#e02020"/>
<rect x="184" y="788" width="22" height="3"/>
<path d="M157 798 h10 v-4 h6 v-4 h6 v14 h-22z"/>
</g>
<g stroke="#111" fill="none" stroke-width=".8">
<path d="M99.0 634 L103.0 644 M99.0 681 L103.0 690"/>
<path d="M106.0 634 L110.0 644 M106.0 681 L110.0 690"/>
<path d="M113.0 634 L117.0 644 M113.0 681 L117.0 690"/>
<path d="M141.0 634 L145.0 644 M141.0 681 L145.0 690"/>
<path d="M148.0 634 L152.0 644 M148.0 681 L152.0 690"/>
<path d="M155.0 634 L159.0 644 M155.0 681 L159.0 690"/>
<path d="M183.0 634 L187.0 644 M183.0 681 L187.0 690"/>
<path d="M190.0 634 L194.0 644 M190.0 681 L194.0 690"/>
<path d="M197.0 634 L201.0 644 M197.0 681 L201.0 690"/>
</g>
<g shape-rendering="crispEdges">
<path d="M101.5 748 V790" stroke="#c8a040"/>
<path d="M108.5 748 V790" stroke="#c8a040"/>
<path d="M115.5 748 V790" stroke="#c8a040"/>
<path d="M143.5 748 V790" stroke="#c8a040"/>
<path d="M150.5 748 V790" stroke="#c8a040"/>
<path d="M157.5 748 V790" stroke="#c8a040"/>
<path d="M185.5 748 V790" stroke="#c8a040"/>
<path d="M192.5 748 V790" stroke="#c8a040"/>
<path d="M199.5 748 V790" stroke="#c8a040"/>
</g>
<rect x="171.5" y="706.5" width="42" height="28" fill="#fff" stroke="#000" stroke-dasharray="3 2" shape-rendering="crispEdges"/><g fill="#000" shape-rendering="crispEdges"><rect x="186" y="702" width="4" height="4"/><rect x="193" y="702" width="4" height="4"/><rect x="199" y="702" width="4" height="4"/><rect x="181" y="735" width="24" height="4"/><rect x="179" y="739" width="22" height="7"/></g>
<text x="173" y="713" font-size="5" font-family="Liberation Sans" fill="#111">VVFD1</text>
<rect x="32.5" y="776.5" width="215" height="62" fill="none" stroke="#e0a890" shape-rendering="crispEdges"/>
<text x="47" y="783" font-size="5.5" font-family="Liberation Sans" fill="#111">+L2 - field</text>
<circle cx="108.2" cy="802" r="8.5" fill="#fff" stroke="#000"/><text x="105.2" y="800" font-size="6" font-family="Liberation Sans" fill="#4a6a9a">M</text><path d="M104.2 806 q2 -3 4 0 q2 3 4 0" stroke="#111" fill="none" stroke-width=".8"/>
<circle cx="150.2" cy="802" r="8.5" fill="#fff" stroke="#000"/><text x="147.2" y="800" font-size="6" font-family="Liberation Sans" fill="#4a6a9a">M</text><path d="M146.2 806 q2 -3 4 0 q2 3 4 0" stroke="#111" fill="none" stroke-width=".8"/>
<circle cx="192.2" cy="802" r="8.5" fill="#fff" stroke="#000"/><text x="189.2" y="800" font-size="6" font-family="Liberation Sans" fill="#4a6a9a">M</text><path d="M188.2 806 q2 -3 4 0 q2 3 4 0" stroke="#111" fill="none" stroke-width=".8"/>
<g fill="#000" shape-rendering="crispEdges"><rect x="297" y="616" width="7" height="4"/><rect x="297" y="623" width="7" height="5"/><rect x="301" y="628" width="3" height="4"/>
<rect x="308" y="613" width="5" height="3"/><rect x="314" y="613" width="5" height="3"/><rect x="308" y="642" width="5" height="3"/><rect x="314" y="642" width="5" height="3"/>
<rect x="306" y="664" width="4" height="8"/><rect x="313" y="664" width="4" height="8"/>
<rect x="297" y="695" width="7" height="4"/><rect x="279" y="701" width="25" height="5"/><rect x="307" y="710" width="4" height="3"/><rect x="314" y="710" width="4" height="3"/><rect x="306" y="721" width="4" height="3"/><rect x="306" y="718" width="2" height="1"/>
<rect x="367" y="726" width="21" height="5"/><rect x="447" y="723" width="3" height="5"/><rect x="447" y="733" width="3" height="5"/><rect x="490" y="725" width="5" height="5"/><rect x="490" y="732" width="5" height="5"/>
</g>
<g stroke="#111" fill="none" stroke-width="1"><path d="M308 620 L313 632 M314 620 L319 632 M306 627 H322 V638 H318"/><ellipse cx="314" cy="638" rx="6" ry="1.5"/><circle cx="314.5" cy="694.5" r="5" stroke-width="1.2"/><circle cx="314.5" cy="701.5" r="5" stroke-width="1.2"/><path d="M484 725 L488 727.5 L484 730 M484 732 L488 734.5 L484 737"/></g>
<rect x="366.5" y="720.5" width="48" height="48" fill="none" stroke="#000" stroke-dasharray="3 2" shape-rendering="crispEdges"/>
<text x="368" y="726" font-size="5" font-family="Liberation Sans" fill="#111">YCLA</text>
<g fill="none" stroke="#000" shape-rendering="crispEdges">
<path d="M25 880.5 H582 M25 911.5 H387.5 M194.5 880.5 V922 M387.5 880.5 V922 M553.5 880.5 V922"/>
<path d="M401.5 880.5 V907.5 M431.5 880.5 V907.5 M466.5 880.5 V907.5 M484.5 907.5 V922 M387.5 887.5 H553.5 M387.5 894.5 H553.5 M387.5 900.5 H553.5 M387.5 907.5 H553.5 M556 894.5 H578 M556 907.5 H578" stroke-width=".8"/>
</g>
<text x="257" y="891" font-size="9.5" font-family="Liberation Sans" fill="#111" letter-spacing="-0.4">Document book</text>
<text x="225" y="918" font-size="6" font-family="Liberation Sans" fill="#111">+L1</text><text x="352" y="918" font-size="6" font-family="Liberation Sans" fill="#111">Location 1</text>
<text x="28" y="918" font-size="4" font-family="Liberation Sans" fill="#111">CONTRACT:</text>
<text x="390" y="899" font-size="4" font-family="Liberation Sans" fill="#111">0   19/01/2015  ani</text><text x="390" y="906" font-size="4" font-family="Liberation Sans" fill="#111">REV.     DATE       NAME</text><text x="487" y="906" font-size="4" font-family="Liberation Sans" fill="#111">CHANGES</text>
<text x="558" y="886" font-size="4" font-family="Liberation Sans" fill="#111">REVISION</text><text x="562" y="893" font-size="6" font-family="Liberation Sans" fill="#111">0</text><text x="558" y="899" font-size="4" font-family="Liberation Sans" fill="#111">DRAWING</text><text x="562" y="914" font-size="6" font-family="Liberation Sans" fill="#111">04</text>
<text transform="translate(22,920) rotate(-90)" font-size="7.5" font-family="Liberation Sans" fill="#111">DesignSpark Electrical</text>
<g fill="#000" shape-rendering="crispEdges"><rect x="25" y="923" width="42" height="4"/><rect x="25" y="924" width="67" height="3"/><rect x="194" y="911" width="21" height="5"/><rect x="387" y="911" width="21" height="5"/><rect x="484" y="911" width="21" height="5"/></g>
<path d="M26 825 L29 827 L26 829 M580 825 L577 827 L580 829" stroke="#111" fill="none" stroke-width=".8"/>
</svg></div>
<svg width="14" height="14" style="left:5px;top:998px"><rect x="0.5" y="0.5" width="12" height="12" fill="#dfe6ee" stroke="#8a8a8a"/><path d="M3 6 L5.5 9.5 L10 2.5" fill="none" stroke="#3a5a9a" stroke-width="1.8"/></svg>
<div class="tr" style="left:20px;top:999px">Drawing preview</div>
<div class="a" style="left:601px;top:174px;width:5px;height:842px;background:#ececec"></div>
<div class="a" style="left:606px;top:147px;width:4px;height:869px;background:#f6f6f6"></div>
<div class="a" style="left:610px;top:147px;width:1106px;height:20px;background:linear-gradient(#f6f6f6,#ececec)"></div>
<div class="a" style="left:610px;top:166px;width:1106px;height:850px;background:#a3adc9"></div><div class="a" style="left:1715px;top:166px;width:1px;height:850px;background:#8c96b2"></div>
<div class="a" style="left:614px;top:167px;width:1099px;height:3px;background:#4f5358"></div>
<div class="a" style="left:614px;top:170px;width:1099px;height:1px;background:#a0a0a0"></div>
<div class="a" style="left:614px;top:171px;width:1100px;height:843px;background:#fff"></div>
<div class="a" style="left:610px;top:1014px;width:1106px;height:2px;background:#ececec"></div>
<svg width="480" height="20" style="left:610px;top:147px"><defs><linearGradient id="ty" x1="0" y1="0" x2="0" y2="1"><stop offset="0" stop-color="#fdf3d0"/><stop offset="1" stop-color="#f6d98a"/></linearGradient><linearGradient id="tb" x1="0" y1="0" x2="0" y2="1"><stop offset="0" stop-color="#e9eef8"/><stop offset="1" stop-color="#c7d3ea"/></linearGradient></defs><path d="M6 20 L22 2 Q23 1 25 1 H180 L180 20Z" fill="url(#ty)" stroke="#d8c89a" stroke-width=".8"/><path d="M180 20 V3 Q180 1 182 1 H341 L327 20Z" fill="url(#ty)" stroke="#d8c89a" stroke-width=".8"/><path d="M327 20 L341 2 Q342 1 344 1 H466 Q469 1 469 4 V20Z" fill="url(#tb)" stroke="#9aaacc" stroke-width=".8"/></svg>
<svg width="17" height="17" style="left:632px;top:149px"><path d="M1.5 1.5 H11 L15.5 6 V15.5 H1.5Z" fill="#fff" stroke="#111" stroke-width="1.2"/><path d="M3 15 L15 4 V15Z" fill="#6aa0e0"/><path d="M3 14 L9 7" stroke="#e08030" stroke-width="2"/><path d="M7 6 L12 5" stroke="#555" stroke-width="1.2"/></svg>
<svg width="17" height="17" style="left:794px;top:149px"><path d="M1.5 1.5 H11 L15.5 6 V15.5 H1.5Z" fill="#fff" stroke="#111" stroke-width="1.2"/><path d="M3 15 L15 4 V15Z" fill="#6aa0e0"/><path d="M3 14 L9 7" stroke="#e08030" stroke-width="2"/><path d="M7 6 L12 5" stroke="#555" stroke-width="1.2"/></svg>
<svg width="17" height="17" style="left:955px;top:149px"><path d="M3.5 4.5 H13.5 V15.5 H3.5Z" fill="#fff" stroke="#111" stroke-width="1.1"/><path d="M3.5 4.5 L6 1.5 H15.5 V12 L13.5 15.5 M8.5 4.5 V15.5" fill="none" stroke="#111" stroke-width="1.1"/></svg>
<div class="tr" style="left:651px;top:151px;font-size:11px;letter-spacing:-0.45px">04 - POWER DRAWINGS</div>
<div class="tr" style="left:813px;top:151px;font-size:11px;letter-spacing:-0.6px">05 - MOTOR CONTROLS</div>
<div class="tr" style="left:975px;top:151px;font-size:11px;font-weight:bold;letter-spacing:0.1px">07 - Location 1</div>
<svg width="10" height="10" style="left:776px;top:152px"><path d="M1 1 L8.5 8.5 M8.5 1 L1 8.5" stroke="#111" stroke-width="1.6"/></svg>
<svg width="10" height="10" style="left:936px;top:152px"><path d="M1 1 L8.5 8.5 M8.5 1 L1 8.5" stroke="#111" stroke-width="1.6"/></svg>
<svg width="10" height="10" style="left:1064px;top:152px"><path d="M1 1 L8.5 8.5 M8.5 1 L1 8.5" stroke="#111" stroke-width="1.6"/></svg>
<svg width="40" height="14" style="left:1676px;top:150px"><path d="M8 1 L3 5.5 L8 10Z" fill="none" stroke="#111" stroke-width="1.1"/><path d="M16 1 L21 5.5 L16 10Z" fill="none" stroke="#111" stroke-width="1.1"/><path d="M28 2 L36 10 M36 2 L28 10" stroke="#111" stroke-width="1.8"/></svg>
<div class="a" style="left:614px;top:171px;width:1099px;height:843px;overflow:hidden">
<svg width="1912" height="1016" style="left:-614px;top:-171px" shape-rendering="crispEdges">
<path d="M651 231h1v1h-1zM676 231h1v1h-1zM702 231h1v1h-1zM728 231h1v1h-1zM753 231h1v1h-1zM779 231h1v1h-1zM805 231h1v1h-1zM830 231h1v1h-1zM856 231h1v1h-1zM881 231h1v1h-1zM907 231h1v1h-1zM933 231h1v1h-1zM958 231h1v1h-1zM984 231h1v1h-1zM1010 231h1v1h-1zM1035 231h1v1h-1zM1061 231h1v1h-1zM1087 231h1v1h-1zM1112 231h1v1h-1zM1138 231h1v1h-1zM1163 231h1v1h-1zM1189 231h1v1h-1zM1215 231h1v1h-1zM1240 231h1v1h-1zM1266 231h1v1h-1zM1292 231h1v1h-1zM1317 231h1v1h-1zM1343 231h1v1h-1zM1368 231h1v1h-1zM1394 231h1v1h-1zM1420 231h1v1h-1zM1445 231h1v1h-1zM1471 231h1v1h-1zM1497 231h1v1h-1zM1522 231h1v1h-1zM1548 231h1v1h-1zM1573 231h1v1h-1zM1599 231h1v1h-1zM1625 231h1v1h-1zM1650 231h1v1h-1zM1676 231h1v1h-1zM651 256h1v1h-1zM676 256h1v1h-1zM702 256h1v1h-1zM728 256h1v1h-1zM753 256h1v1h-1zM779 256h1v1h-1zM805 256h1v1h-1zM830 256h1v1h-1zM856 256h1v1h-1zM881 256h1v1h-1zM907 256h1v1h-1zM933 256h1v1h-1zM958 256h1v1h-1zM984 256h1v1h-1zM1010 256h1v1h-1zM1035 256h1v1h-1zM1061 256h1v1h-1zM1087 256h1v1h-1zM1112 256h1v1h-1zM1138 256h1v1h-1zM1163 256h1v1h-1zM1189 256h1v1h-1zM1215 256h1v1h-1zM1240 256h1v1h-1zM1266 256h1v1h-1zM1292 256h1v1h-1zM1317 256h1v1h-1zM1343 256h1v1h-1zM1368 256h1v1h-1zM1394 256h1v1h-1zM1420 256h1v1h-1zM1445 256h1v1h-1zM1471 256h1v1h-1zM1497 256h1v1h-1zM1522 256h1v1h-1zM1548 256h1v1h-1zM1573 256h1v1h-1zM1599 256h1v1h-1zM1625 256h1v1h-1zM1650 256h1v1h-1zM1676 256h1v1h-1zM651 282h1v1h-1zM676 282h1v1h-1zM702 282h1v1h-1zM728 282h1v1h-1zM753 282h1v1h-1zM779 282h1v1h-1zM805 282h1v1h-1zM830 282h1v1h-1zM856 282h1v1h-1zM881 282h1v1h-1zM907 282h1v1h-1zM933 282h1v1h-1zM958 282h1v1h-1zM984 282h1v1h-1zM1010 282h1v1h-1zM1035 282h1v1h-1zM1061 282h1v1h-1zM1087 282h1v1h-1zM1112 282h1v1h-1zM1138 282h1v1h-1zM1163 282h1v1h-1zM1189 282h1v1h-1zM1215 282h1v1h-1zM1240 282h1v1h-1zM1266 282h1v1h-1zM1292 282h1v1h-1zM1317 282h1v1h-1zM1343 282h1v1h-1zM1368 282h1v1h-1zM1394 282h1v1h-1zM1420 282h1v1h-1zM1445 282h1v1h-1zM1471 282h1v1h-1zM1497 282h1v1h-1zM1522 282h1v1h-1zM1548 282h1v1h-1zM1573 282h1v1h-1zM1599 282h1v1h-1zM1625 282h1v1h-1zM1650 282h1v1h-1zM1676 282h1v1h-1zM651 308h1v1h-1zM676 308h1v1h-1zM702 308h1v1h-1zM728 308h1v1h-1zM753 308h1v1h-1zM779 308h1v1h-1zM805 308h1v1h-1zM830 308h1v1h-1zM856 308h1v1h-1zM881 308h1v1h-1zM907 308h1v1h-1zM933 308h1v1h-1zM958 308h1v1h-1zM984 308h1v1h-1zM1010 308h1v1h-1zM1035 308h1v1h-1zM1061 308h1v1h-1zM1087 308h1v1h-1zM1112 308h1v1h-1zM1138 308h1v1h-1zM1163 308h1v1h-1zM1189 308h1v1h-1zM1215 308h1v1h-1zM1240 308h1v1h-1zM1266 308h1v1h-1zM1292 308h1v1h-1zM1317 308h1v1h-1zM1343 308h1v1h-1zM1368 308h1v1h-1zM1394 308h1v1h-1zM1420 308h1v1h-1zM1445 308h1v1h-1zM1471 308h1v1h-1zM1497 308h1v1h-1zM1522 308h1v1h-1zM1548 308h1v1h-1zM1573 308h1v1h-1zM1599 308h1v1h-1zM1625 308h1v1h-1zM1650 308h1v1h-1zM1676 308h1v1h-1zM651 333h1v1h-1zM676 333h1v1h-1zM702 333h1v1h-1zM728 333h1v1h-1zM753 333h1v1h-1zM779 333h1v1h-1zM805 333h1v1h-1zM830 333h1v1h-1zM856 333h1v1h-1zM881 333h1v1h-1zM907 333h1v1h-1zM933 333h1v1h-1zM958 333h1v1h-1zM984 333h1v1h-1zM1010 333h1v1h-1zM1035 333h1v1h-1zM1061 333h1v1h-1zM1087 333h1v1h-1zM1112 333h1v1h-1zM1138 333h1v1h-1zM1163 333h1v1h-1zM1189 333h1v1h-1zM1215 333h1v1h-1zM1240 333h1v1h-1zM1266 333h1v1h-1zM1292 333h1v1h-1zM1317 333h1v1h-1zM1343 333h1v1h-1zM1368 333h1v1h-1zM1394 333h1v1h-1zM1420 333h1v1h-1zM1445 333h1v1h-1zM1471 333h1v1h-1zM1497 333h1v1h-1zM1522 333h1v1h-1zM1548 333h1v1h-1zM1573 333h1v1h-1zM1599 333h1v1h-1zM1625 333h1v1h-1zM1650 333h1v1h-1zM1676 333h1v1h-1zM651 359h1v1h-1zM676 359h1v1h-1zM702 359h1v1h-1zM728 359h1v1h-1zM753 359h1v1h-1zM779 359h1v1h-1zM805 359h1v1h-1zM830 359h1v1h-1zM856 359h1v1h-1zM881 359h1v1h-1zM907 359h1v1h-1zM933 359h1v1h-1zM958 359h1v1h-1zM984 359h1v1h-1zM1010 359h1v1h-1zM1035 359h1v1h-1zM1061 359h1v1h-1zM1087 359h1v1h-1zM1112 359h1v1h-1zM1138 359h1v1h-1zM1163 359h1v1h-1zM1189 359h1v1h-1zM1215 359h1v1h-1zM1240 359h1v1h-1zM1266 359h1v1h-1zM1292 359h1v1h-1zM1317 359h1v1h-1zM1343 359h1v1h-1zM1368 359h1v1h-1zM1394 359h1v1h-1zM1420 359h1v1h-1zM1445 359h1v1h-1zM1471 359h1v1h-1zM1497 359h1v1h-1zM1522 359h1v1h-1zM1548 359h1v1h-1zM1573 359h1v1h-1zM1599 359h1v1h-1zM1625 359h1v1h-1zM1650 359h1v1h-1zM1676 359h1v1h-1zM651 385h1v1h-1zM676 385h1v1h-1zM702 385h1v1h-1zM728 385h1v1h-1zM753 385h1v1h-1zM779 385h1v1h-1zM805 385h1v1h-1zM830 385h1v1h-1zM856 385h1v1h-1zM881 385h1v1h-1zM907 385h1v1h-1zM933 385h1v1h-1zM958 385h1v1h-1zM984 385h1v1h-1zM1010 385h1v1h-1zM1035 385h1v1h-1zM1061 385h1v1h-1zM1087 385h1v1h-1zM1112 385h1v1h-1zM1138 385h1v1h-1zM1163 385h1v1h-1zM1189 385h1v1h-1zM1215 385h1v1h-1zM1240 385h1v1h-1zM1266 385h1v1h-1zM1292 385h1v1h-1zM1317 385h1v1h-1zM1343 385h1v1h-1zM1368 385h1v1h-1zM1394 385h1v1h-1zM1420 385h1v1h-1zM1445 385h1v1h-1zM1471 385h1v1h-1zM1497 385h1v1h-1zM1522 385h1v1h-1zM1548 385h1v1h-1zM1573 385h1v1h-1zM1599 385h1v1h-1zM1625 385h1v1h-1zM1650 385h1v1h-1zM1676 385h1v1h-1zM651 410h1v1h-1zM676 410h1v1h-1zM702 410h1v1h-1zM728 410h1v1h-1zM753 410h1v1h-1zM779 410h1v1h-1zM805 410h1v1h-1zM830 410h1v1h-1zM856 410h1v1h-1zM881 410h1v1h-1zM907 410h1v1h-1zM933 410h1v1h-1zM958 410h1v1h-1zM984 410h1v1h-1zM1010 410h1v1h-1zM1035 410h1v1h-1zM1061 410h1v1h-1zM1087 410h1v1h-1zM1112 410h1v1h-1zM1138 410h1v1h-1zM1163 410h1v1h-1zM1189 410h1v1h-1zM1215 410h1v1h-1zM1240 410h1v1h-1zM1266 410h1v1h-1zM1292 410h1v1h-1zM1317 410h1v1h-1zM1343 410h1v1h-1zM1368 410h1v1h-1zM1394 410h1v1h-1zM1420 410h1v1h-1zM1445 410h1v1h-1zM1471 410h1v1h-1zM1497 410h1v1h-1zM1522 410h1v1h-1zM1548 410h1v1h-1zM1573 410h1v1h-1zM1599 410h1v1h-1zM1625 410h1v1h-1zM1650 410h1v1h-1zM1676 410h1v1h-1zM651 436h1v1h-1zM676 436h1v1h-1zM702 436h1v1h-1zM728 436h1v1h-1zM753 436h1v1h-1zM779 436h1v1h-1zM805 436h1v1h-1zM830 436h1v1h-1zM856 436h1v1h-1zM881 436h1v1h-1zM907 436h1v1h-1zM933 436h1v1h-1zM958 436h1v1h-1zM984 436h1v1h-1zM1010 436h1v1h-1zM1035 436h1v1h-1zM1061 436h1v1h-1zM1087 436h1v1h-1zM1112 436h1v1h-1zM1138 436h1v1h-1zM1163 436h1v1h-1zM1189 436h1v1h-1zM1215 436h1v1h-1zM1240 436h1v1h-1zM1266 436h1v1h-1zM1292 436h1v1h-1zM1317 436h1v1h-1zM1343 436h1v1h-1zM1368 436h1v1h-1zM1394 436h1v1h-1zM1420 436h1v1h-1zM1445 436h1v1h-1zM1471 436h1v1h-1zM1497 436h1v1h-1zM1522 436h1v1h-1zM1548 436h1v1h-1zM1573 436h1v1h-1zM1599 436h1v1h-1zM1625 436h1v1h-1zM1650 436h1v1h-1zM1676 436h1v1h-1zM651 462h1v1h-1zM676 462h1v1h-1zM702 462h1v1h-1zM728 462h1v1h-1zM753 462h1v1h-1zM779 462h1v1h-1zM805 462h1v1h-1zM830 462h1v1h-1zM856 462h1v1h-1zM881 462h1v1h-1zM907 462h1v1h-1zM933 462h1v1h-1zM958 462h1v1h-1zM984 462h1v1h-1zM1010 462h1v1h-1zM1035 462h1v1h-1zM1061 462h1v1h-1zM1087 462h1v1h-1zM1112 462h1v1h-1zM1138 462h1v1h-1zM1163 462h1v1h-1zM1189 462h1v1h-1zM1215 462h1v1h-1zM1240 462h1v1h-1zM1266 462h1v1h-1zM1292 462h1v1h-1zM1317 462h1v1h-1zM1343 462h1v1h-1zM1368 462h1v1h-1zM1394 462h1v1h-1zM1420 462h1v1h-1zM1445 462h1v1h-1zM1471 462h1v1h-1zM1497 462h1v1h-1zM1522 462h1v1h-1zM1548 462h1v1h-1zM1573 462h1v1h-1zM1599 462h1v1h-1zM1625 462h1v1h-1zM1650 462h1v1h-1zM1676 462h1v1h-1zM651 487h1v1h-1zM676 487h1v1h-1zM702 487h1v1h-1zM728 487h1v1h-1zM753 487h1v1h-1zM779 487h1v1h-1zM805 487h1v1h-1zM830 487h1v1h-1zM856 487h1v1h-1zM881 487h1v1h-1zM907 487h1v1h-1zM933 487h1v1h-1zM958 487h1v1h-1zM984 487h1v1h-1zM1010 487h1v1h-1zM1035 487h1v1h-1zM1061 487h1v1h-1zM1087 487h1v1h-1zM1112 487h1v1h-1zM1138 487h1v1h-1zM1163 487h1v1h-1zM1189 487h1v1h-1zM1215 487h1v1h-1zM1240 487h1v1h-1zM1266 487h1v1h-1zM1292 487h1v1h-1zM1317 487h1v1h-1zM1343 487h1v1h-1zM1368 487h1v1h-1zM1394 487h1v1h-1zM1420 487h1v1h-1zM1445 487h1v1h-1zM1471 487h1v1h-1zM1497 487h1v1h-1zM1522 487h1v1h-1zM1548 487h1v1h-1zM1573 487h1v1h-1zM1599 487h1v1h-1zM1625 487h1v1h-1zM1650 487h1v1h-1zM1676 487h1v1h-1zM651 513h1v1h-1zM676 513h1v1h-1zM702 513h1v1h-1zM728 513h1v1h-1zM753 513h1v1h-1zM779 513h1v1h-1zM805 513h1v1h-1zM830 513h1v1h-1zM856 513h1v1h-1zM881 513h1v1h-1zM907 513h1v1h-1zM933 513h1v1h-1zM958 513h1v1h-1zM984 513h1v1h-1zM1010 513h1v1h-1zM1035 513h1v1h-1zM1061 513h1v1h-1zM1087 513h1v1h-1zM1112 513h1v1h-1zM1138 513h1v1h-1zM1163 513h1v1h-1zM1189 513h1v1h-1zM1215 513h1v1h-1zM1240 513h1v1h-1zM1266 513h1v1h-1zM1292 513h1v1h-1zM1317 513h1v1h-1zM1343 513h1v1h-1zM1368 513h1v1h-1zM1394 513h1v1h-1zM1420 513h1v1h-1zM1445 513h1v1h-1zM1471 513h1v1h-1zM1497 513h1v1h-1zM1522 513h1v1h-1zM1548 513h1v1h-1zM1573 513h1v1h-1zM1599 513h1v1h-1zM1625 513h1v1h-1zM1650 513h1v1h-1zM1676 513h1v1h-1zM651 539h1v1h-1zM676 539h1v1h-1zM702 539h1v1h-1zM728 539h1v1h-1zM753 539h1v1h-1zM779 539h1v1h-1zM805 539h1v1h-1zM830 539h1v1h-1zM856 539h1v1h-1zM881 539h1v1h-1zM907 539h1v1h-1zM933 539h1v1h-1zM958 539h1v1h-1zM984 539h1v1h-1zM1010 539h1v1h-1zM1035 539h1v1h-1zM1061 539h1v1h-1zM1087 539h1v1h-1zM1112 539h1v1h-1zM1138 539h1v1h-1zM1163 539h1v1h-1zM1189 539h1v1h-1zM1215 539h1v1h-1zM1240 539h1v1h-1zM1266 539h1v1h-1zM1292 539h1v1h-1zM1317 539h1v1h-1zM1343 539h1v1h-1zM1368 539h1v1h-1zM1394 539h1v1h-1zM1420 539h1v1h-1zM1445 539h1v1h-1zM1471 539h1v1h-1zM1497 539h1v1h-1zM1522 539h1v1h-1zM1548 539h1v1h-1zM1573 539h1v1h-1zM1599 539h1v1h-1zM1625 539h1v1h-1zM1650 539h1v1h-1zM1676 539h1v1h-1zM651 564h1v1h-1zM676 564h1v1h-1zM702 564h1v1h-1zM728 564h1v1h-1zM753 564h1v1h-1zM779 564h1v1h-1zM805 564h1v1h-1zM830 564h1v1h-1zM856 564h1v1h-1zM881 564h1v1h-1zM907 564h1v1h-1zM933 564h1v1h-1zM958 564h1v1h-1zM984 564h1v1h-1zM1010 564h1v1h-1zM1035 564h1v1h-1zM1061 564h1v1h-1zM1087 564h1v1h-1zM1112 564h1v1h-1zM1138 564h1v1h-1zM1163 564h1v1h-1zM1189 564h1v1h-1zM1215 564h1v1h-1zM1240 564h1v1h-1zM1266 564h1v1h-1zM1292 564h1v1h-1zM1317 564h1v1h-1zM1343 564h1v1h-1zM1368 564h1v1h-1zM1394 564h1v1h-1zM1420 564h1v1h-1zM1445 564h1v1h-1zM1471 564h1v1h-1zM1497 564h1v1h-1zM1522 564h1v1h-1zM1548 564h1v1h-1zM1573 564h1v1h-1zM1599 564h1v1h-1zM1625 564h1v1h-1zM1650 564h1v1h-1zM1676 564h1v1h-1zM651 590h1v1h-1zM676 590h1v1h-1zM702 590h1v1h-1zM728 590h1v1h-1zM753 590h1v1h-1zM779 590h1v1h-1zM805 590h1v1h-1zM830 590h1v1h-1zM856 590h1v1h-1zM881 590h1v1h-1zM907 590h1v1h-1zM933 590h1v1h-1zM958 590h1v1h-1zM984 590h1v1h-1zM1010 590h1v1h-1zM1035 590h1v1h-1zM1061 590h1v1h-1zM1087 590h1v1h-1zM1112 590h1v1h-1zM1138 590h1v1h-1zM1163 590h1v1h-1zM1189 590h1v1h-1zM1215 590h1v1h-1zM1240 590h1v1h-1zM1266 590h1v1h-1zM1292 590h1v1h-1zM1317 590h1v1h-1zM1343 590h1v1h-1zM1368 590h1v1h-1zM1394 590h1v1h-1zM1420 590h1v1h-1zM1445 590h1v1h-1zM1471 590h1v1h-1zM1497 590h1v1h-1zM1522 590h1v1h-1zM1548 590h1v1h-1zM1573 590h1v1h-1zM1599 590h1v1h-1zM1625 590h1v1h-1zM1650 590h1v1h-1zM1676 590h1v1h-1zM651 616h1v1h-1zM676 616h1v1h-1zM702 616h1v1h-1zM728 616h1v1h-1zM753 616h1v1h-1zM779 616h1v1h-1zM805 616h1v1h-1zM830 616h1v1h-1zM856 616h1v1h-1zM881 616h1v1h-1zM907 616h1v1h-1zM933 616h1v1h-1zM958 616h1v1h-1zM984 616h1v1h-1zM1010 616h1v1h-1zM1035 616h1v1h-1zM1061 616h1v1h-1zM1087 616h1v1h-1zM1112 616h1v1h-1zM1138 616h1v1h-1zM1163 616h1v1h-1zM1189 616h1v1h-1zM1215 616h1v1h-1zM1240 616h1v1h-1zM1266 616h1v1h-1zM1292 616h1v1h-1zM1317 616h1v1h-1zM1343 616h1v1h-1zM1368 616h1v1h-1zM1394 616h1v1h-1zM1420 616h1v1h-1zM1445 616h1v1h-1zM1471 616h1v1h-1zM1497 616h1v1h-1zM1522 616h1v1h-1zM1548 616h1v1h-1zM1573 616h1v1h-1zM1599 616h1v1h-1zM1625 616h1v1h-1zM1650 616h1v1h-1zM1676 616h1v1h-1zM651 641h1v1h-1zM676 641h1v1h-1zM702 641h1v1h-1zM728 641h1v1h-1zM753 641h1v1h-1zM779 641h1v1h-1zM805 641h1v1h-1zM830 641h1v1h-1zM856 641h1v1h-1zM881 641h1v1h-1zM907 641h1v1h-1zM933 641h1v1h-1zM958 641h1v1h-1zM984 641h1v1h-1zM1010 641h1v1h-1zM1035 641h1v1h-1zM1061 641h1v1h-1zM1087 641h1v1h-1zM1112 641h1v1h-1zM1138 641h1v1h-1zM1163 641h1v1h-1zM1189 641h1v1h-1zM1215 641h1v1h-1zM1240 641h1v1h-1zM1266 641h1v1h-1zM1292 641h1v1h-1zM1317 641h1v1h-1zM1343 641h1v1h-1zM1368 641h1v1h-1zM1394 641h1v1h-1zM1420 641h1v1h-1zM1445 641h1v1h-1zM1471 641h1v1h-1zM1497 641h1v1h-1zM1522 641h1v1h-1zM1548 641h1v1h-1zM1573 641h1v1h-1zM1599 641h1v1h-1zM1625 641h1v1h-1zM1650 641h1v1h-1zM1676 641h1v1h-1zM651 667h1v1h-1zM676 667h1v1h-1zM702 667h1v1h-1zM728 667h1v1h-1zM753 667h1v1h-1zM779 667h1v1h-1zM805 667h1v1h-1zM830 667h1v1h-1zM856 667h1v1h-1zM881 667h1v1h-1zM907 667h1v1h-1zM933 667h1v1h-1zM958 667h1v1h-1zM984 667h1v1h-1zM1010 667h1v1h-1zM1035 667h1v1h-1zM1061 667h1v1h-1zM1087 667h1v1h-1zM1112 667h1v1h-1zM1138 667h1v1h-1zM1163 667h1v1h-1zM1189 667h1v1h-1zM1215 667h1v1h-1zM1240 667h1v1h-1zM1266 667h1v1h-1zM1292 667h1v1h-1zM1317 667h1v1h-1zM1343 667h1v1h-1zM1368 667h1v1h-1zM1394 667h1v1h-1zM1420 667h1v1h-1zM1445 667h1v1h-1zM1471 667h1v1h-1zM1497 667h1v1h-1zM1522 667h1v1h-1zM1548 667h1v1h-1zM1573 667h1v1h-1zM1599 667h1v1h-1zM1625 667h1v1h-1zM1650 667h1v1h-1zM1676 667h1v1h-1zM651 693h1v1h-1zM676 693h1v1h-1zM702 693h1v1h-1zM728 693h1v1h-1zM753 693h1v1h-1zM779 693h1v1h-1zM805 693h1v1h-1zM830 693h1v1h-1zM856 693h1v1h-1zM881 693h1v1h-1zM907 693h1v1h-1zM933 693h1v1h-1zM958 693h1v1h-1zM984 693h1v1h-1zM1010 693h1v1h-1zM1035 693h1v1h-1zM1061 693h1v1h-1zM1087 693h1v1h-1zM1112 693h1v1h-1zM1138 693h1v1h-1zM1163 693h1v1h-1zM1189 693h1v1h-1zM1215 693h1v1h-1zM1240 693h1v1h-1zM1266 693h1v1h-1zM1292 693h1v1h-1zM1317 693h1v1h-1zM1343 693h1v1h-1zM1368 693h1v1h-1zM1394 693h1v1h-1zM1420 693h1v1h-1zM1445 693h1v1h-1zM1471 693h1v1h-1zM1497 693h1v1h-1zM1522 693h1v1h-1zM1548 693h1v1h-1zM1573 693h1v1h-1zM1599 693h1v1h-1zM1625 693h1v1h-1zM1650 693h1v1h-1zM1676 693h1v1h-1zM651 718h1v1h-1zM676 718h1v1h-1zM702 718h1v1h-1zM728 718h1v1h-1zM753 718h1v1h-1zM779 718h1v1h-1zM805 718h1v1h-1zM830 718h1v1h-1zM856 718h1v1h-1zM881 718h1v1h-1zM907 718h1v1h-1zM933 718h1v1h-1zM958 718h1v1h-1zM984 718h1v1h-1zM1010 718h1v1h-1zM1035 718h1v1h-1zM1061 718h1v1h-1zM1087 718h1v1h-1zM1112 718h1v1h-1zM1138 718h1v1h-1zM1163 718h1v1h-1zM1189 718h1v1h-1zM1215 718h1v1h-1zM1240 718h1v1h-1zM1266 718h1v1h-1zM1292 718h1v1h-1zM1317 718h1v1h-1zM1343 718h1v1h-1zM1368 718h1v1h-1zM1394 718h1v1h-1zM1420 718h1v1h-1zM1445 718h1v1h-1zM1471 718h1v1h-1zM1497 718h1v1h-1zM1522 718h1v1h-1zM1548 718h1v1h-1zM1573 718h1v1h-1zM1599 718h1v1h-1zM1625 718h1v1h-1zM1650 718h1v1h-1zM1676 718h1v1h-1zM651 744h1v1h-1zM676 744h1v1h-1zM702 744h1v1h-1zM728 744h1v1h-1zM753 744h1v1h-1zM779 744h1v1h-1zM805 744h1v1h-1zM830 744h1v1h-1zM856 744h1v1h-1zM881 744h1v1h-1zM907 744h1v1h-1zM933 744h1v1h-1zM958 744h1v1h-1zM984 744h1v1h-1zM1010 744h1v1h-1zM1035 744h1v1h-1zM1061 744h1v1h-1zM1087 744h1v1h-1zM1112 744h1v1h-1zM1138 744h1v1h-1zM1163 744h1v1h-1zM1189 744h1v1h-1zM1215 744h1v1h-1zM1240 744h1v1h-1zM1266 744h1v1h-1zM1292 744h1v1h-1zM1317 744h1v1h-1zM1343 744h1v1h-1zM1368 744h1v1h-1zM1394 744h1v1h-1zM1420 744h1v1h-1zM1445 744h1v1h-1zM1471 744h1v1h-1zM1497 744h1v1h-1zM1522 744h1v1h-1zM1548 744h1v1h-1zM1573 744h1v1h-1zM1599 744h1v1h-1zM1625 744h1v1h-1zM1650 744h1v1h-1zM1676 744h1v1h-1zM651 769h1v1h-1zM676 769h1v1h-1zM702 769h1v1h-1zM728 769h1v1h-1zM753 769h1v1h-1zM779 769h1v1h-1zM805 769h1v1h-1zM830 769h1v1h-1zM856 769h1v1h-1zM881 769h1v1h-1zM907 769h1v1h-1zM933 769h1v1h-1zM958 769h1v1h-1zM984 769h1v1h-1zM1010 769h1v1h-1zM1035 769h1v1h-1zM1061 769h1v1h-1zM1087 769h1v1h-1zM1112 769h1v1h-1zM1138 769h1v1h-1zM1163 769h1v1h-1zM1189 769h1v1h-1zM1215 769h1v1h-1zM1240 769h1v1h-1zM1266 769h1v1h-1zM1292 769h1v1h-1zM1317 769h1v1h-1zM1343 769h1v1h-1zM1368 769h1v1h-1zM1394 769h1v1h-1zM1420 769h1v1h-1zM1445 769h1v1h-1zM1471 769h1v1h-1zM1497 769h1v1h-1zM1522 769h1v1h-1zM1548 769h1v1h-1zM1573 769h1v1h-1zM1599 769h1v1h-1zM1625 769h1v1h-1zM1650 769h1v1h-1zM1676 769h1v1h-1zM651 795h1v1h-1zM676 795h1v1h-1zM702 795h1v1h-1zM728 795h1v1h-1zM753 795h1v1h-1zM779 795h1v1h-1zM805 795h1v1h-1zM830 795h1v1h-1zM856 795h1v1h-1zM881 795h1v1h-1zM907 795h1v1h-1zM933 795h1v1h-1zM958 795h1v1h-1zM984 795h1v1h-1zM1010 795h1v1h-1zM1035 795h1v1h-1zM1061 795h1v1h-1zM1087 795h1v1h-1zM1112 795h1v1h-1zM1138 795h1v1h-1zM1163 795h1v1h-1zM1189 795h1v1h-1zM1215 795h1v1h-1zM1240 795h1v1h-1zM1266 795h1v1h-1zM1292 795h1v1h-1zM1317 795h1v1h-1zM1343 795h1v1h-1zM1368 795h1v1h-1zM1394 795h1v1h-1zM1420 795h1v1h-1zM1445 795h1v1h-1zM1471 795h1v1h-1zM1497 795h1v1h-1zM1522 795h1v1h-1zM1548 795h1v1h-1zM1573 795h1v1h-1zM1599 795h1v1h-1zM1625 795h1v1h-1zM1650 795h1v1h-1zM1676 795h1v1h-1zM651 821h1v1h-1zM676 821h1v1h-1zM702 821h1v1h-1zM728 821h1v1h-1zM753 821h1v1h-1zM779 821h1v1h-1zM805 821h1v1h-1zM830 821h1v1h-1zM856 821h1v1h-1zM881 821h1v1h-1zM907 821h1v1h-1zM933 821h1v1h-1zM958 821h1v1h-1zM984 821h1v1h-1zM1010 821h1v1h-1zM1035 821h1v1h-1zM1061 821h1v1h-1zM1087 821h1v1h-1zM1112 821h1v1h-1zM1138 821h1v1h-1zM1163 821h1v1h-1zM1189 821h1v1h-1zM1215 821h1v1h-1zM1240 821h1v1h-1zM1266 821h1v1h-1zM1292 821h1v1h-1zM1317 821h1v1h-1zM1343 821h1v1h-1zM1368 821h1v1h-1zM1394 821h1v1h-1zM1420 821h1v1h-1zM1445 821h1v1h-1zM1471 821h1v1h-1zM1497 821h1v1h-1zM1522 821h1v1h-1zM1548 821h1v1h-1zM1573 821h1v1h-1zM1599 821h1v1h-1zM1625 821h1v1h-1zM1650 821h1v1h-1zM1676 821h1v1h-1zM651 846h1v1h-1zM676 846h1v1h-1zM702 846h1v1h-1zM728 846h1v1h-1zM753 846h1v1h-1zM779 846h1v1h-1zM805 846h1v1h-1zM830 846h1v1h-1zM856 846h1v1h-1zM881 846h1v1h-1zM907 846h1v1h-1zM933 846h1v1h-1zM958 846h1v1h-1zM984 846h1v1h-1zM1010 846h1v1h-1zM1035 846h1v1h-1zM1061 846h1v1h-1zM1087 846h1v1h-1zM1112 846h1v1h-1zM1138 846h1v1h-1zM1163 846h1v1h-1zM1189 846h1v1h-1zM1215 846h1v1h-1zM1240 846h1v1h-1zM1266 846h1v1h-1zM1292 846h1v1h-1zM1317 846h1v1h-1zM1343 846h1v1h-1zM1368 846h1v1h-1zM1394 846h1v1h-1zM1420 846h1v1h-1zM1445 846h1v1h-1zM1471 846h1v1h-1zM1497 846h1v1h-1zM1522 846h1v1h-1zM1548 846h1v1h-1zM1573 846h1v1h-1zM1599 846h1v1h-1zM1625 846h1v1h-1zM1650 846h1v1h-1zM1676 846h1v1h-1zM651 872h1v1h-1zM676 872h1v1h-1zM702 872h1v1h-1zM728 872h1v1h-1zM753 872h1v1h-1zM779 872h1v1h-1zM805 872h1v1h-1zM830 872h1v1h-1zM856 872h1v1h-1zM881 872h1v1h-1zM907 872h1v1h-1zM933 872h1v1h-1zM958 872h1v1h-1zM984 872h1v1h-1zM1010 872h1v1h-1zM1035 872h1v1h-1zM1061 872h1v1h-1zM1087 872h1v1h-1zM1112 872h1v1h-1zM1138 872h1v1h-1zM1163 872h1v1h-1zM1189 872h1v1h-1zM1215 872h1v1h-1zM1240 872h1v1h-1zM1266 872h1v1h-1zM1292 872h1v1h-1zM1317 872h1v1h-1zM1343 872h1v1h-1zM1368 872h1v1h-1zM1394 872h1v1h-1zM1420 872h1v1h-1zM1445 872h1v1h-1zM1471 872h1v1h-1zM1497 872h1v1h-1zM1522 872h1v1h-1zM1548 872h1v1h-1zM1573 872h1v1h-1zM1599 872h1v1h-1zM1625 872h1v1h-1zM1650 872h1v1h-1zM1676 872h1v1h-1zM651 898h1v1h-1zM676 898h1v1h-1zM702 898h1v1h-1zM728 898h1v1h-1zM753 898h1v1h-1zM779 898h1v1h-1zM805 898h1v1h-1zM830 898h1v1h-1zM856 898h1v1h-1zM881 898h1v1h-1zM907 898h1v1h-1zM933 898h1v1h-1zM958 898h1v1h-1zM984 898h1v1h-1zM1010 898h1v1h-1zM1035 898h1v1h-1zM1061 898h1v1h-1zM1087 898h1v1h-1zM1112 898h1v1h-1zM1138 898h1v1h-1zM1163 898h1v1h-1zM1189 898h1v1h-1zM1215 898h1v1h-1zM1240 898h1v1h-1zM1266 898h1v1h-1zM1292 898h1v1h-1zM1317 898h1v1h-1zM1343 898h1v1h-1zM1368 898h1v1h-1zM1394 898h1v1h-1zM1420 898h1v1h-1zM1445 898h1v1h-1zM1471 898h1v1h-1zM1497 898h1v1h-1zM1522 898h1v1h-1zM1548 898h1v1h-1zM1573 898h1v1h-1zM1599 898h1v1h-1zM1625 898h1v1h-1zM1650 898h1v1h-1zM1676 898h1v1h-1zM651 923h1v1h-1zM676 923h1v1h-1zM702 923h1v1h-1zM728 923h1v1h-1zM753 923h1v1h-1zM779 923h1v1h-1zM805 923h1v1h-1zM830 923h1v1h-1zM856 923h1v1h-1zM881 923h1v1h-1zM907 923h1v1h-1zM933 923h1v1h-1zM958 923h1v1h-1zM984 923h1v1h-1zM1010 923h1v1h-1zM1035 923h1v1h-1zM1061 923h1v1h-1zM1087 923h1v1h-1zM1112 923h1v1h-1zM1138 923h1v1h-1zM1163 923h1v1h-1zM1189 923h1v1h-1zM1215 923h1v1h-1zM1240 923h1v1h-1zM1266 923h1v1h-1zM1292 923h1v1h-1zM1317 923h1v1h-1zM1343 923h1v1h-1zM1368 923h1v1h-1zM1394 923h1v1h-1zM1420 923h1v1h-1zM1445 923h1v1h-1zM1471 923h1v1h-1zM1497 923h1v1h-1zM1522 923h1v1h-1zM1548 923h1v1h-1zM1573 923h1v1h-1zM1599 923h1v1h-1zM1625 923h1v1h-1zM1650 923h1v1h-1zM1676 923h1v1h-1zM651 949h1v1h-1zM676 949h1v1h-1zM702 949h1v1h-1zM728 949h1v1h-1zM753 949h1v1h-1zM779 949h1v1h-1zM805 949h1v1h-1zM830 949h1v1h-1zM856 949h1v1h-1zM881 949h1v1h-1zM907 949h1v1h-1zM933 949h1v1h-1zM958 949h1v1h-1zM984 949h1v1h-1zM1010 949h1v1h-1zM1035 949h1v1h-1zM1061 949h1v1h-1zM1087 949h1v1h-1zM1112 949h1v1h-1zM1138 949h1v1h-1zM1163 949h1v1h-1zM1189 949h1v1h-1zM1215 949h1v1h-1zM1240 949h1v1h-1zM1266 949h1v1h-1zM1292 949h1v1h-1zM1317 949h1v1h-1zM1343 949h1v1h-1zM1368 949h1v1h-1zM1394 949h1v1h-1zM1420 949h1v1h-1zM1445 949h1v1h-1zM1471 949h1v1h-1zM1497 949h1v1h-1zM1522 949h1v1h-1zM1548 949h1v1h-1zM1573 949h1v1h-1zM1599 949h1v1h-1zM1625 949h1v1h-1zM1650 949h1v1h-1zM1676 949h1v1h-1z" fill="#000"/>
<rect x="625.5" y="213.5" width="1076" height="761" fill="none" stroke="#000" stroke-width="1"/>
<rect x="651" y="239" width="1024.5" height="710" fill="none" stroke="#000" stroke-width="2"/>
<path d="M1697.5 261 V1014 M977 981.5 H1712" stroke="#000" stroke-width="1"/>
<rect x="1687.5" y="971.5" width="20" height="20" fill="none" stroke="#000"/>
<g shape-rendering="auto"><path d="M625.5 924 V974.5 H676" stroke="#4ac04a" stroke-width="1" fill="none"/><path d="M620 930 L625.5 924 L631 930 M670 969 L676 974.5 L670 980" stroke="#4ac04a" fill="none"/></g>
<path d="M653 766 L657 769 L653 772 M1674 766 L1670 769 L1674 772" stroke="#111" fill="none"/>
<path d="M651 871.5 H1675.5" stroke="#000" stroke-width="2"/>
<path d="M651 929.5 H1317.5 M962.5 871.5 V949 M1317.5 871.5 V949 M1624.5 871.5 V949" stroke="#000" stroke-width="1.4"/>
<path d="M1343.5 871.5 V923.5 M1399.5 871.5 V923.5 M1463.5 871.5 V923.5 M1496.5 923.5 V949 M1317.5 884.5 H1624.5 M1317.5 897.5 H1624.5 M1317.5 910.5 H1624.5 M1317.5 923.5 H1624.5 M1631 897.5 H1670 M1631 923.5 H1670" stroke="#000" stroke-width="1"/>
<g shape-rendering="auto"><g fill="none" stroke="#000" stroke-width="1">
<path d="M728 346.5 H1052 M728.5 346.5 V756.5 M727.5 756.5 H1052 M1035.5 346.5 V756.5"/>
<rect x="732" y="345" width="5" height="3" fill="#000" stroke="none"/><rect x="1024" y="345" width="5" height="3" fill="#000" stroke="none"/>
<path d="M1048.5 347 V756"/><rect x="1047" y="350" width="3" height="5" fill="#000" stroke="none"/><rect x="1047" y="748" width="3" height="5" fill="#000" stroke="none"/>
<path d="M734.5 353.5 H1028.5 V391.5 H772.5 M772.5 353.5 V724.5 H734.5 V353.5"/>
<path d="M772.5 529.5 H1028.5 V567.5 H772.5 M772.5 622.5 H1028.5 V660.5 H772.5"/>
<path d="M793.5 456.5 H1014.5 V474.5 H793.5Z M793.5 459.5 H1014.5 M793.5 471.5 H1014.5"/>
<path d="M793.5 584.5 H1014.5 V602.5 H793.5Z M793.5 587.5 H1014.5 M793.5 599.5 H1014.5"/>
<path d="M777.5 690.5 H1023.5 V708.5 H777.5Z M777.5 693.5 H1023.5 M777.5 705.5 H1023.5"/>
</g>
<rect x="818.5" y="449.5" width="23" height="44" fill="#fff" stroke="#000"/>
<path d="M818.5 455.5 H841.5 M818.5 459.5 H841.5 M818.5 483.5 H841.5" stroke="#000" fill="none"/>
<rect x="820.5" y="451.5" width="4" height="3" fill="#000"/><rect x="820.5" y="487" width="4" height="4" fill="#222"/><rect x="821.5" y="488" width="2" height="2" fill="#fff"/>
<rect x="827.5" y="451.5" width="4" height="3" fill="#000"/><rect x="827.5" y="487" width="4" height="4" fill="#222"/><rect x="828.5" y="488" width="2" height="2" fill="#fff"/>
<rect x="834.5" y="451.5" width="4" height="3" fill="#000"/><rect x="834.5" y="487" width="4" height="4" fill="#222"/><rect x="835.5" y="488" width="2" height="2" fill="#fff"/>
<path d="M821.5 462 h4 v5 h-4z M828.5 462 h4 v4 h-1 v5 h-3z M835.5 462 h4 v6 h-4z" fill="none" stroke="#000"/>
<rect x="825.5" y="475" width="4" height="1.5" fill="#000"/><path d="M832.5 481.5 h8 v-4 h-8" fill="none" stroke="#000"/>
<rect x="823.5" y="493" width="14" height="1.5" fill="#000"/>
<text x="819.0" y="447" font-size="7.5" font-family="Liberation Sans" fill="#111" letter-spacing="-0.8">-Q1</text>
<rect x="841.5" y="449.5" width="23" height="44" fill="#fff" stroke="#000"/>
<path d="M841.5 455.5 H864.5 M841.5 459.5 H864.5 M841.5 483.5 H864.5" stroke="#000" fill="none"/>
<rect x="843.5" y="451.5" width="4" height="3" fill="#000"/><rect x="843.5" y="487" width="4" height="4" fill="#222"/><rect x="844.5" y="488" width="2" height="2" fill="#fff"/>
<rect x="850.5" y="451.5" width="4" height="3" fill="#000"/><rect x="850.5" y="487" width="4" height="4" fill="#222"/><rect x="851.5" y="488" width="2" height="2" fill="#fff"/>
<rect x="857.5" y="451.5" width="4" height="3" fill="#000"/><rect x="857.5" y="487" width="4" height="4" fill="#222"/><rect x="858.5" y="488" width="2" height="2" fill="#fff"/>
<path d="M844.5 462 h4 v5 h-4z M851.5 462 h4 v4 h-1 v5 h-3z M858.5 462 h4 v6 h-4z" fill="none" stroke="#000"/>
<rect x="848.5" y="475" width="4" height="1.5" fill="#000"/><path d="M855.5 481.5 h8 v-4 h-8" fill="none" stroke="#000"/>
<rect x="846.5" y="493" width="14" height="1.5" fill="#000"/>
<text x="842.0" y="447" font-size="7.5" font-family="Liberation Sans" fill="#111" letter-spacing="-0.8">-Q2</text>
<rect x="864.5" y="449.5" width="23" height="44" fill="#fff" stroke="#000"/>
<path d="M864.5 455.5 H887.5 M864.5 459.5 H887.5 M864.5 483.5 H887.5" stroke="#000" fill="none"/>
<rect x="866.5" y="451.5" width="4" height="3" fill="#000"/><rect x="866.5" y="487" width="4" height="4" fill="#222"/><rect x="867.5" y="488" width="2" height="2" fill="#fff"/>
<rect x="873.5" y="451.5" width="4" height="3" fill="#000"/><rect x="873.5" y="487" width="4" height="4" fill="#222"/><rect x="874.5" y="488" width="2" height="2" fill="#fff"/>
<rect x="880.5" y="451.5" width="4" height="3" fill="#000"/><rect x="880.5" y="487" width="4" height="4" fill="#222"/><rect x="881.5" y="488" width="2" height="2" fill="#fff"/>
<path d="M867.5 462 h4 v5 h-4z M874.5 462 h4 v4 h-1 v5 h-3z M881.5 462 h4 v6 h-4z" fill="none" stroke="#000"/>
<rect x="871.5" y="475" width="4" height="1.5" fill="#000"/><path d="M878.5 481.5 h8 v-4 h-8" fill="none" stroke="#000"/>
<rect x="869.5" y="493" width="14" height="1.5" fill="#000"/>
<text x="865.0" y="447" font-size="7.5" font-family="Liberation Sans" fill="#111" letter-spacing="-0.8">-Q3</text>
<rect x="898" y="412" width="23.5" height="111" fill="#000"/>
<rect x="915" y="407" width="6" height="6" fill="#000"/><rect x="917" y="409" width="2" height="2" fill="#fff"/>
<rect x="892.5" y="450" width="7" height="10" fill="#000"/><path d="M893.5 460 v9 q0 4 4 4" stroke="#000" fill="none"/>
<rect x="900" y="414" width="19.5" height="5.5" fill="#fff"/>
<rect x="900" y="421" width="19.5" height="7" fill="#fff"/>
<rect x="900" y="430" width="19.5" height="7.5" fill="#fff"/>
<rect x="900" y="440" width="19.5" height="6" fill="#fff"/>
<rect x="900" y="447.5" width="19.5" height="4.5" fill="#fff"/>
<rect x="900" y="454" width="19.5" height="7.5" fill="#fff"/>
<rect x="901" y="463" width="18.5" height="5.5" fill="#fff"/>
<rect x="901" y="470.5" width="18.5" height="6.5" fill="#fff"/>
<rect x="904" y="479" width="15.5" height="6" fill="#fff"/>
<rect x="906" y="487" width="13.5" height="6" fill="#fff"/>
<rect x="906" y="495" width="13.5" height="5.5" fill="#fff"/>
<rect x="905" y="502" width="14.5" height="5.5" fill="#fff"/>
<rect x="905" y="509" width="14.5" height="4.5" fill="#fff"/>
<rect x="900" y="515.5" width="19.5" height="5.5" fill="#fff"/>
<path d="M902 415 h2 v4 h-2z M907 415 h2 v4 h-2z M914 415 h2 v4 h-2z M903 424 L913 422 L913 424 L903 426z M908 434 l3 -3 l1 3z M904 442 h15 v2 h-15z M906 456 h3 v3 h-3z M904 473 h2 v3 h-2z M909 472 h3 v5 h-3z M914 472 h2 v5 h-2z M908 489 h3 v3 h-3z M913 488 h3 v5 h-3z M912 496 v12 h2 v-12z M909 510 h6 v2 h-6z M902 517 h3 v3 h-3z M908 517 h3 v3 h-3z M914 517 h3 v3 h-3z" fill="#000"/>
<text x="896" y="406" font-size="9.5" font-family="Liberation Sans" fill="#111" letter-spacing="-0.9">-Q4</text>
<path d="M942.5 407.5 H965 M942.5 522.5 H965 M962.5 407.5 V522.5" stroke="#000" fill="none"/><rect x="960.5" y="410" width="3" height="4" fill="#000"/><rect x="960.5" y="515" width="3" height="4" fill="#000"/>
<text transform="translate(959,472) rotate(-90)" font-size="9" font-family="Liberation Sans" fill="#555" letter-spacing="-0.5">225</text>
<path d="M817.5 497 V514 M843.5 497 V514 M818 510.5 H843" stroke="#000" fill="none"/><rect x="820" y="509" width="5" height="3" fill="#000"/><rect x="836" y="509" width="5" height="3" fill="#000"/>
<text x="824" y="508.5" font-size="9.5" font-family="Liberation Sans" fill="#222" letter-spacing="-0.6">50</text>
<rect x="818" y="577" width="70" height="45" fill="#000"/>
<path d="M823.0 583 h4 v1.5 h-1.3 v3 h1.3 v1.5 h-4 v-1.5 h1.3 v-3 h-1.3z" fill="#fff"/>
<path d="M823.0 610 h4 v1.5 h-1.3 v3 h1.3 v1.5 h-4 v-1.5 h1.3 v-3 h-1.3z" fill="#fff"/>
<path d="M829.5 583 h4 v1.5 h-1.3 v3 h1.3 v1.5 h-4 v-1.5 h1.3 v-3 h-1.3z" fill="#fff"/>
<path d="M829.5 610 h4 v1.5 h-1.3 v3 h1.3 v1.5 h-4 v-1.5 h1.3 v-3 h-1.3z" fill="#fff"/>
<path d="M836.0 583 h4 v1.5 h-1.3 v3 h1.3 v1.5 h-4 v-1.5 h1.3 v-3 h-1.3z" fill="#fff"/>
<path d="M836.0 610 h4 v1.5 h-1.3 v3 h1.3 v1.5 h-4 v-1.5 h1.3 v-3 h-1.3z" fill="#fff"/>
<rect x="821" y="579" width="1.5" height="1.5" fill="#fff"/><rect x="824" y="579" width="4" height="1.5" fill="#fff"/><rect x="829" y="579" width="1.5" height="1.5" fill="#fff"/>
<rect x="819" y="590" width="5" height="2" fill="#fff"/><rect x="826" y="590" width="2" height="4" fill="#fff"/><rect x="831" y="590" width="9" height="2" fill="#fff"/><rect x="819" y="593" width="5" height="2" fill="#fff"/><rect x="831" y="593" width="7" height="2" fill="#fff"/>
<rect x="820" y="597" width="2" height="3" fill="#fff"/><rect x="825" y="598" width="1" height="1" fill="#fff"/><rect x="830" y="597" width="2" height="3" fill="#fff"/><rect x="836" y="597" width="1.5" height="2" fill="#fff"/>
<rect x="819" y="604" width="4" height="2" fill="#fff"/><rect x="824" y="605" width="7" height="2.5" fill="#fff"/><rect x="833" y="604" width="6" height="3" fill="#fff"/>
<rect x="820" y="618" width="8" height="2" fill="#fff"/><rect x="831" y="618" width="5" height="1.5" fill="#fff"/>
<text x="818.5" y="575.5" font-size="7" font-family="Liberation Sans" fill="#222" letter-spacing="-0.7">-K1</text>
<path d="M846.0 583 h4 v1.5 h-1.3 v3 h1.3 v1.5 h-4 v-1.5 h1.3 v-3 h-1.3z" fill="#fff"/>
<path d="M846.0 610 h4 v1.5 h-1.3 v3 h1.3 v1.5 h-4 v-1.5 h1.3 v-3 h-1.3z" fill="#fff"/>
<path d="M852.5 583 h4 v1.5 h-1.3 v3 h1.3 v1.5 h-4 v-1.5 h1.3 v-3 h-1.3z" fill="#fff"/>
<path d="M852.5 610 h4 v1.5 h-1.3 v3 h1.3 v1.5 h-4 v-1.5 h1.3 v-3 h-1.3z" fill="#fff"/>
<path d="M859.0 583 h4 v1.5 h-1.3 v3 h1.3 v1.5 h-4 v-1.5 h1.3 v-3 h-1.3z" fill="#fff"/>
<path d="M859.0 610 h4 v1.5 h-1.3 v3 h1.3 v1.5 h-4 v-1.5 h1.3 v-3 h-1.3z" fill="#fff"/>
<rect x="844" y="579" width="1.5" height="1.5" fill="#fff"/><rect x="847" y="579" width="4" height="1.5" fill="#fff"/><rect x="852" y="579" width="1.5" height="1.5" fill="#fff"/>
<rect x="842" y="590" width="5" height="2" fill="#fff"/><rect x="849" y="590" width="2" height="4" fill="#fff"/><rect x="854" y="590" width="9" height="2" fill="#fff"/><rect x="842" y="593" width="5" height="2" fill="#fff"/><rect x="854" y="593" width="7" height="2" fill="#fff"/>
<rect x="843" y="597" width="2" height="3" fill="#fff"/><rect x="848" y="598" width="1" height="1" fill="#fff"/><rect x="853" y="597" width="2" height="3" fill="#fff"/><rect x="859" y="597" width="1.5" height="2" fill="#fff"/>
<rect x="842" y="604" width="4" height="2" fill="#fff"/><rect x="847" y="605" width="7" height="2.5" fill="#fff"/><rect x="856" y="604" width="6" height="3" fill="#fff"/>
<rect x="843" y="618" width="8" height="2" fill="#fff"/><rect x="854" y="618" width="5" height="1.5" fill="#fff"/>
<text x="841.5" y="575.5" font-size="7" font-family="Liberation Sans" fill="#222" letter-spacing="-0.7">-K2</text>
<path d="M869.0 583 h4 v1.5 h-1.3 v3 h1.3 v1.5 h-4 v-1.5 h1.3 v-3 h-1.3z" fill="#fff"/>
<path d="M869.0 610 h4 v1.5 h-1.3 v3 h1.3 v1.5 h-4 v-1.5 h1.3 v-3 h-1.3z" fill="#fff"/>
<path d="M875.5 583 h4 v1.5 h-1.3 v3 h1.3 v1.5 h-4 v-1.5 h1.3 v-3 h-1.3z" fill="#fff"/>
<path d="M875.5 610 h4 v1.5 h-1.3 v3 h1.3 v1.5 h-4 v-1.5 h1.3 v-3 h-1.3z" fill="#fff"/>
<path d="M882.0 583 h4 v1.5 h-1.3 v3 h1.3 v1.5 h-4 v-1.5 h1.3 v-3 h-1.3z" fill="#fff"/>
<path d="M882.0 610 h4 v1.5 h-1.3 v3 h1.3 v1.5 h-4 v-1.5 h1.3 v-3 h-1.3z" fill="#fff"/>
<rect x="867" y="579" width="1.5" height="1.5" fill="#fff"/><rect x="870" y="579" width="4" height="1.5" fill="#fff"/><rect x="875" y="579" width="1.5" height="1.5" fill="#fff"/>
<rect x="865" y="590" width="5" height="2" fill="#fff"/><rect x="872" y="590" width="2" height="4" fill="#fff"/><rect x="877" y="590" width="9" height="2" fill="#fff"/><rect x="865" y="593" width="5" height="2" fill="#fff"/><rect x="877" y="593" width="7" height="2" fill="#fff"/>
<rect x="866" y="597" width="2" height="3" fill="#fff"/><rect x="871" y="598" width="1" height="1" fill="#fff"/><rect x="876" y="597" width="2" height="3" fill="#fff"/><rect x="882" y="597" width="1.5" height="2" fill="#fff"/>
<rect x="865" y="604" width="4" height="2" fill="#fff"/><rect x="870" y="605" width="7" height="2.5" fill="#fff"/><rect x="879" y="604" width="6" height="3" fill="#fff"/>
<rect x="866" y="618" width="8" height="2" fill="#fff"/><rect x="877" y="618" width="5" height="1.5" fill="#fff"/>
<text x="864.5" y="575.5" font-size="7" font-family="Liberation Sans" fill="#222" letter-spacing="-0.7">-K3</text>
<g fill="none" stroke="#000"><rect x="808.5" y="675.5" width="44" height="52"/><rect x="810.5" y="682.5" width="40" height="38"/><path d="M810.5 717.5 H850.5"/></g>
<rect x="823" y="674" width="15" height="9" fill="#000"/><rect x="825" y="677" width="11" height="2" fill="#fff"/><rect x="808" y="672" width="3" height="4" fill="#000"/>
<rect x="825.5" y="721.5" width="10" height="9" fill="#fff" stroke="#000"/><rect x="827" y="723" width="7" height="2" fill="#000"/>
<rect x="811" y="694" width="22" height="7" fill="#000"/><rect x="813" y="696" width="18" height="2" fill="#fff"/>
<path d="M871.5 663 V751 M871.5 747.5 H915.5 V751" stroke="#000" fill="none"/><rect x="876" y="746" width="4" height="3" fill="#000"/><rect x="910" y="746" width="4" height="3" fill="#000"/>
<path d="M872 678.5 H875 Q878 676 888 676 Q900 676 903 678 H915.5 V734.5 H903 Q900 737 888 737 Q878 737 875 734.5 H872" fill="#fff" stroke="#000"/>
<path d="M872 687.5 H915.5 M872 724.5 H915.5" stroke="#000"/>
<path d="M877 679 v4 h2 v-4 M904 679 v4 h2 v-4 M877 730 v4 h2 v-4 M904 730 v4 h2 v-4" stroke="#000" fill="none"/>
<path d="M879 687.5 v5 h17 v-5 M884 687.5 v5 M889 687.5 v5 M903 687.5 v5 h4 v-5 M881 724.5 v-5 h4 v5 M893 724.5 v-5 h14 v5 M897 724.5 v-5 M901 724.5 v-5" stroke="#000" fill="none"/>
<text x="873" y="674.5" font-size="8.5" font-family="Liberation Sans" fill="#222" letter-spacing="-0.3">-T1</text>
<text x="885" y="743" font-size="9.5" font-family="Liberation Sans" fill="#333" letter-spacing="-0.7">87,5</text>
<rect x="929" y="689" width="65.5" height="19.5" fill="#000"/>
<path d="M930.5 691 h5 v1.5 h-1.5 v2 h1.5 v1.5 h-5 v-1.5 h1.5 v-2 h-1.5z M930.5 699 h5 v1.5 h-1.5 v2 h1.5 v1.5 h-5 v-1.5 h1.5 v-2 h-1.5z" fill="#fff"/>
<path d="M937.65 691 h5 v1.5 h-1.5 v2 h1.5 v1.5 h-5 v-1.5 h1.5 v-2 h-1.5z M937.65 699 h5 v1.5 h-1.5 v2 h1.5 v1.5 h-5 v-1.5 h1.5 v-2 h-1.5z" fill="#fff"/>
<path d="M944.8 691 h5 v1.5 h-1.5 v2 h1.5 v1.5 h-5 v-1.5 h1.5 v-2 h-1.5z M944.8 699 h5 v1.5 h-1.5 v2 h1.5 v1.5 h-5 v-1.5 h1.5 v-2 h-1.5z" fill="#fff"/>
<path d="M951.95 691 h5 v1.5 h-1.5 v2 h1.5 v1.5 h-5 v-1.5 h1.5 v-2 h-1.5z M951.95 699 h5 v1.5 h-1.5 v2 h1.5 v1.5 h-5 v-1.5 h1.5 v-2 h-1.5z" fill="#fff"/>
<path d="M959.1 691 h5 v1.5 h-1.5 v2 h1.5 v1.5 h-5 v-1.5 h1.5 v-2 h-1.5z M959.1 699 h5 v1.5 h-1.5 v2 h1.5 v1.5 h-5 v-1.5 h1.5 v-2 h-1.5z" fill="#fff"/>
<path d="M966.25 691 h5 v1.5 h-1.5 v2 h1.5 v1.5 h-5 v-1.5 h1.5 v-2 h-1.5z M966.25 699 h5 v1.5 h-1.5 v2 h1.5 v1.5 h-5 v-1.5 h1.5 v-2 h-1.5z" fill="#fff"/>
<path d="M973.4 691 h5 v1.5 h-1.5 v2 h1.5 v1.5 h-5 v-1.5 h1.5 v-2 h-1.5z M973.4 699 h5 v1.5 h-1.5 v2 h1.5 v1.5 h-5 v-1.5 h1.5 v-2 h-1.5z" fill="#fff"/>
<path d="M980.55 691 h5 v1.5 h-1.5 v2 h1.5 v1.5 h-5 v-1.5 h1.5 v-2 h-1.5z M980.55 699 h5 v1.5 h-1.5 v2 h1.5 v1.5 h-5 v-1.5 h1.5 v-2 h-1.5z" fill="#fff"/>
<path d="M987.7 691 h5 v1.5 h-1.5 v2 h1.5 v1.5 h-5 v-1.5 h1.5 v-2 h-1.5z M987.7 699 h5 v1.5 h-1.5 v2 h1.5 v1.5 h-5 v-1.5 h1.5 v-2 h-1.5z" fill="#fff"/>
<rect x="995" y="679" width="18" height="43" fill="#000"/>
<rect x="997.0" y="682" width="1.3" height="1.5" fill="#fff"/>
<rect x="1000.3" y="682" width="1.3" height="1.5" fill="#fff"/>
<rect x="1003.6" y="682" width="1.3" height="1.5" fill="#fff"/>
<rect x="1006.9" y="682" width="1.3" height="1.5" fill="#fff"/>
<rect x="1010.2" y="682" width="1.3" height="1.5" fill="#fff"/>
<rect x="997.0" y="687" width="1.3" height="1.5" fill="#fff"/>
<rect x="1000.3" y="687" width="1.3" height="1.5" fill="#fff"/>
<rect x="1003.6" y="687" width="1.3" height="1.5" fill="#fff"/>
<rect x="1006.9" y="687" width="1.3" height="1.5" fill="#fff"/>
<rect x="1010.2" y="687" width="1.3" height="1.5" fill="#fff"/>
<rect x="997.0" y="692" width="1.3" height="1.5" fill="#fff"/>
<rect x="1000.3" y="692" width="1.3" height="1.5" fill="#fff"/>
<rect x="1003.6" y="692" width="1.3" height="1.5" fill="#fff"/>
<rect x="1006.9" y="692" width="1.3" height="1.5" fill="#fff"/>
<rect x="1010.2" y="692" width="1.3" height="1.5" fill="#fff"/>
<rect x="997.0" y="697" width="1.3" height="1.5" fill="#fff"/>
<rect x="1000.3" y="697" width="1.3" height="1.5" fill="#fff"/>
<rect x="1003.6" y="697" width="1.3" height="1.5" fill="#fff"/>
<rect x="1006.9" y="697" width="1.3" height="1.5" fill="#fff"/>
<rect x="1010.2" y="697" width="1.3" height="1.5" fill="#fff"/>
<rect x="997.0" y="702" width="1.3" height="1.5" fill="#fff"/>
<rect x="1000.3" y="702" width="1.3" height="1.5" fill="#fff"/>
<rect x="1003.6" y="702" width="1.3" height="1.5" fill="#fff"/>
<rect x="1006.9" y="702" width="1.3" height="1.5" fill="#fff"/>
<rect x="1010.2" y="702" width="1.3" height="1.5" fill="#fff"/>
<rect x="997.0" y="707" width="1.3" height="1.5" fill="#fff"/>
<rect x="1000.3" y="707" width="1.3" height="1.5" fill="#fff"/>
<rect x="1003.6" y="707" width="1.3" height="1.5" fill="#fff"/>
<rect x="1006.9" y="707" width="1.3" height="1.5" fill="#fff"/>
<rect x="1010.2" y="707" width="1.3" height="1.5" fill="#fff"/>
<rect x="997.0" y="712" width="1.3" height="1.5" fill="#fff"/>
<rect x="1000.3" y="712" width="1.3" height="1.5" fill="#fff"/>
<rect x="1003.6" y="712" width="1.3" height="1.5" fill="#fff"/>
<rect x="1006.9" y="712" width="1.3" height="1.5" fill="#fff"/>
<rect x="1010.2" y="712" width="1.3" height="1.5" fill="#fff"/>
<rect x="997.0" y="717" width="1.3" height="1.5" fill="#fff"/>
<rect x="1000.3" y="717" width="1.3" height="1.5" fill="#fff"/>
<rect x="1003.6" y="717" width="1.3" height="1.5" fill="#fff"/>
<rect x="1006.9" y="717" width="1.3" height="1.5" fill="#fff"/>
<rect x="1010.2" y="717" width="1.3" height="1.5" fill="#fff"/>
<path d="M995 690 H1023.5 M995 708.5 H1023.5" stroke="#fff" stroke-width=".6"/>
<text x="874" y="343" font-size="9" font-family="Liberation Sans" fill="#111" letter-spacing="-0.3">600</text>
<text transform="translate(1046,558) rotate(-90)" font-size="9" font-family="Liberation Sans" fill="#111" letter-spacing="-0.3">800</text></g>
<text transform="translate(644,948) rotate(-90)" font-size="14" font-family="Liberation Sans" fill="#111" letter-spacing="-0.15">DesignSpark Electrical</text>
</svg>
<div class="a" style="left:464px;top:706px;font-size:17px;line-height:19px;white-space:nowrap;color:#111;">Document book</div>
<div class="a" style="left:43px;top:761px;font-size:9px;line-height:11px;white-space:nowrap;color:#111;letter-spacing:-0.5px">CONTRACT:</div>
<div class="a" style="left:36px;top:780px;font-size:5px;line-height:7px;white-space:nowrap;color:#111;">Document realised with version : <b>2015.07.01.07.1.07</b></div>
<div class="a" style="left:349px;top:758px;font-size:7px;line-height:9px;white-space:nowrap;color:#111;letter-spacing:-0.3px">LOCATION:</div>
<div class="a" style="left:406px;top:760px;font-size:13px;line-height:15px;white-space:nowrap;color:#111;">+L1</div>
<div class="a" style="left:641px;top:760px;font-size:12px;line-height:14px;white-space:nowrap;color:#111;">Location 1</div>
<div class="a" style="left:711px;top:727px;font-size:9px;line-height:11px;white-space:nowrap;color:#111;">0</div>
<div class="a" style="left:731px;top:727px;font-size:9px;line-height:11px;white-space:nowrap;color:#111;">17/04/2015</div>
<div class="a" style="left:790px;top:727px;font-size:9px;line-height:11px;white-space:nowrap;color:#111;">INITIALS</div>
<div class="a" style="left:708px;top:740px;font-size:9px;line-height:11px;white-space:nowrap;color:#111;letter-spacing:-0.3px">REV.</div>
<div class="a" style="left:746px;top:740px;font-size:9px;line-height:11px;white-space:nowrap;color:#111;letter-spacing:-0.3px">DATE</div>
<div class="a" style="left:804px;top:740px;font-size:9px;line-height:11px;white-space:nowrap;color:#111;letter-spacing:-0.3px">NAME</div>
<div class="a" style="left:889px;top:740px;font-size:9px;line-height:11px;white-space:nowrap;color:#111;letter-spacing:-0.6px">CHANGES</div>
<div class="a" style="left:705px;top:756px;font-size:6px;line-height:8px;white-space:nowrap;color:#111;">User data 1</div>
<div class="a" style="left:885px;top:756px;font-size:6px;line-height:8px;white-space:nowrap;color:#111;">User data 2</div>
<div class="a" style="left:1023px;top:701px;font-size:9px;line-height:11px;white-space:nowrap;color:#111;letter-spacing:-0.6px">SCALE</div>
<div class="a" style="left:1023px;top:710px;font-size:10px;line-height:12px;white-space:nowrap;color:#111;">1 / 5</div>
<div class="a" style="left:1016px;top:727px;font-size:9px;line-height:11px;white-space:nowrap;color:#111;letter-spacing:-0.6px">REVISION</div>
<div class="a" style="left:1029px;top:735px;font-size:12px;line-height:14px;white-space:nowrap;color:#111;">0</div>
<div class="a" style="left:1017px;top:752px;font-size:9px;line-height:11px;white-space:nowrap;color:#111;letter-spacing:-0.6px">DRAWING</div>
<div class="a" style="left:1025px;top:760px;font-size:12px;line-height:14px;white-space:nowrap;color:#111;">07</div>
</div>
<div class="a" style="left:1716px;top:147px;width:196px;height:869px;background:#fafafa"></div>
<div class="phdr" style="left:1720px;width:192px">Cabinet layout</div>
<svg width="30" height="16" style="left:1884px;top:152px"><path d="M6 2 H11 M7 2 V9 H10 V2 M5 9 H12 M8.5 9 V14" stroke="#f0f0f0" stroke-width="1.3" fill="none"/><path d="M21 4 L29 12 M29 4 L21 12" stroke="#f0f0f0" stroke-width="1.6"/></svg>
<div class="a" style="left:1720px;top:174px;width:192px;height:21px;background:#ececec"></div>
<svg width="14" height="14" style="left:1721px;top:180px"><rect x="0.5" y="0.5" width="12" height="12" fill="url(#cbg)" stroke="#8a8a8a"/><defs><linearGradient id="cbg" x1="0" y1="0" x2="1" y2="1"><stop offset="0" stop-color="#d8d8d8"/><stop offset="1" stop-color="#f8f8f8"/></linearGradient></defs></svg>
<div class="tr" style="left:1736px;top:181px">Hide already inserted components</div>
<div class="a" style="left:1721px;top:194px;width:191px;height:17px;background:linear-gradient(#f6f6f6,#ebebeb);border-bottom:1px solid #b5b5b5"></div>
<div class="tr" style="left:1800px;top:196px">Symbols</div>
<div class="a" style="left:1721px;top:211px;width:191px;height:786px;background:#fff"></div>
<div class="a" style="left:1720px;top:147px;width:1px;height:869px;background:#c8c8c8"></div>
<svg width="192" height="360" style="left:1720px;top:211px"><path d="M1 15.5 H192" stroke="#e2e2e2"/><path d="M1 31.5 H192" stroke="#e2e2e2"/><path d="M1 47.5 H192" stroke="#e2e2e2"/><path d="M1 63.5 H192" stroke="#e2e2e2"/><path d="M1 79.5 H192" stroke="#e2e2e2"/><path d="M1 95.5 H192" stroke="#e2e2e2"/><path d="M1 111.5 H192" stroke="#e2e2e2"/><path d="M1 127.5 H192" stroke="#e2e2e2"/><path d="M1 143.5 H192" stroke="#e2e2e2"/><path d="M1 159.5 H192" stroke="#e2e2e2"/><path d="M1 175.5 H192" stroke="#e2e2e2"/><path d="M1 191.5 H192" stroke="#e2e2e2"/><path d="M1 207.5 H192" stroke="#e2e2e2"/><path d="M1 223.5 H192" stroke="#e2e2e2"/><path d="M1 239.5 H192" stroke="#e2e2e2"/><path d="M1 255.5 H192" stroke="#e2e2e2"/><path d="M1 271.5 H192" stroke="#e2e2e2"/><path d="M1 287.5 H192" stroke="#e2e2e2"/><path d="M1 303.5 H192" stroke="#e2e2e2"/><path d="M1 319.5 H192" stroke="#e2e2e2"/><path d="M1 335.5 H192" stroke="#e2e2e2"/><rect x="40" y="0" width="152" height="16" fill="#3d95ef"/><path d="M28.5 17 V328" stroke="#999" stroke-dasharray="1 1"/><path d="M29 24.5 H39" stroke="#999" stroke-dasharray="1 1"/><rect x="40.5" y="18.5" width="11" height="11" fill="#fff" stroke="#9a9a9a"/><path d="M43 24 L45.5 27 L50 20.5" fill="none" stroke="#111" stroke-width="1.8"/><rect x="55.5" y="17.5" width="14" height="13" rx="1.5" fill="#4a86c8" stroke="#2a5a98"/><circle cx="62.5" cy="24" r="3.2" fill="none" stroke="#fff" stroke-width="1.6" stroke-dasharray="1.2 0.9"/><circle cx="62.5" cy="24" r="1.2" fill="#fff"/><path d="M29 40.5 H39" stroke="#999" stroke-dasharray="1 1"/><rect x="40.5" y="34.5" width="11" height="11" fill="#fff" stroke="#9a9a9a"/><path d="M43 40 L45.5 43 L50 36.5" fill="none" stroke="#111" stroke-width="1.8"/><rect x="55.5" y="33.5" width="14" height="13" rx="1.5" fill="#4a86c8" stroke="#2a5a98"/><circle cx="62.5" cy="40" r="3.2" fill="none" stroke="#fff" stroke-width="1.6" stroke-dasharray="1.2 0.9"/><circle cx="62.5" cy="40" r="1.2" fill="#fff"/><path d="M29 56.5 H39" stroke="#999" stroke-dasharray="1 1"/><rect x="40.5" y="50.5" width="11" height="11" fill="#fff" stroke="#9a9a9a"/><path d="M43 56 L45.5 59 L50 52.5" fill="none" stroke="#111" stroke-width="1.8"/><rect x="55.5" y="49.5" width="14" height="13" rx="1.5" fill="#4a86c8" stroke="#2a5a98"/><circle cx="62.5" cy="56" r="3.2" fill="none" stroke="#fff" stroke-width="1.6" stroke-dasharray="1.2 0.9"/><circle cx="62.5" cy="56" r="1.2" fill="#fff"/><path d="M29 72.5 H39" stroke="#999" stroke-dasharray="1 1"/><rect x="40.5" y="66.5" width="11" height="11" fill="#fff" stroke="#9a9a9a"/><path d="M43 72 L45.5 75 L50 68.5" fill="none" stroke="#111" stroke-width="1.8"/><rect x="55.5" y="65.5" width="14" height="13" rx="1.5" fill="#4a86c8" stroke="#2a5a98"/><circle cx="62.5" cy="72" r="3.2" fill="none" stroke="#fff" stroke-width="1.6" stroke-dasharray="1.2 0.9"/><circle cx="62.5" cy="72" r="1.2" fill="#fff"/><path d="M29 88.5 H39" stroke="#999" stroke-dasharray="1 1"/><rect x="40.5" y="82.5" width="11" height="11" fill="#fff" stroke="#9a9a9a"/><path d="M43 88 L45.5 91 L50 84.5" fill="none" stroke="#111" stroke-width="1.8"/><rect x="55.5" y="81.5" width="14" height="13" rx="1.5" fill="#4a86c8" stroke="#2a5a98"/><circle cx="62.5" cy="88" r="3.2" fill="none" stroke="#fff" stroke-width="1.6" stroke-dasharray="1.2 0.9"/><circle cx="62.5" cy="88" r="1.2" fill="#fff"/><path d="M29 104.5 H39" stroke="#999" stroke-dasharray="1 1"/><rect x="40.5" y="98.5" width="11" height="11" fill="#fff" stroke="#9a9a9a"/><path d="M43 104 L45.5 107 L50 100.5" fill="none" stroke="#111" stroke-width="1.8"/><rect x="55.5" y="97.5" width="14" height="13" rx="1.5" fill="#4a86c8" stroke="#2a5a98"/><circle cx="62.5" cy="104" r="3.2" fill="none" stroke="#fff" stroke-width="1.6" stroke-dasharray="1.2 0.9"/><circle cx="62.5" cy="104" r="1.2" fill="#fff"/><path d="M29 120.5 H39" stroke="#999" stroke-dasharray="1 1"/><rect x="40.5" y="114.5" width="11" height="11" fill="#fff" stroke="#9a9a9a"/><path d="M43 120 L45.5 123 L50 116.5" fill="none" stroke="#111" stroke-width="1.8"/><rect x="55.5" y="113.5" width="14" height="13" rx="1.5" fill="#4a86c8" stroke="#2a5a98"/><circle cx="62.5" cy="120" r="3.2" fill="none" stroke="#fff" stroke-width="1.6" stroke-dasharray="1.2 0.9"/><circle cx="62.5" cy="120" r="1.2" fill="#fff"/><path d="M29 136.5 H39" stroke="#999" stroke-dasharray="1 1"/><rect x="40.5" y="130.5" width="11" height="11" fill="#fff" stroke="#9a9a9a"/><path d="M43 136 L45.5 139 L50 132.5" fill="none" stroke="#111" stroke-width="1.8"/><rect x="55.5" y="129.5" width="14" height="13" rx="1.5" fill="#4a86c8" stroke="#2a5a98"/><circle cx="62.5" cy="136" r="3.2" fill="none" stroke="#fff" stroke-width="1.6" stroke-dasharray="1.2 0.9"/><circle cx="62.5" cy="136" r="1.2" fill="#fff"/><rect x="5.5" y="4.5" width="8" height="8" fill="#fff" stroke="#999"/><path d="M7.5 8.5 H11.5 M9.5 6.5 V10.5" stroke="#111"/><path d="M14 8.5 H19" stroke="#999" stroke-dasharray="1 1"/><g transform="translate(20,1)"><path d="M1 3 H12 V14 H1Z" fill="#eee" stroke="#111" stroke-width="1.2"/><path d="M1 3 L3 1 H14 V12 L12 14" fill="none" stroke="#111" stroke-width="1.1"/><path d="M6.5 3 V14" stroke="#111"/><rect x="4.5" y="8" width="1" height="2" fill="#111"/><rect x="8" y="8" width="1" height="2" fill="#111"/></g><rect x="24.5" y="148.5" width="8" height="8" fill="#fff" stroke="#999"/><path d="M26.5 152.5 H30.5 M28.5 150.5 V154.5" stroke="#111"/><path d="M33 152.5 H38" stroke="#999" stroke-dasharray="1 1"/><g transform="translate(38,144)"><path d="M9 1 L14 4 L9 7 L4 4Z" fill="#8a7ae0"/><path d="M14 4 L17.5 8 L12.5 11 L9 7Z" fill="#e04848"/><path d="M4 4 L9 7 L6 11 L0.5 8Z" fill="#f0a020"/><path d="M9 7 L12.5 11 L9 15.5 L5.5 11Z" fill="#40b040"/></g><rect x="24.5" y="164.5" width="8" height="8" fill="#fff" stroke="#999"/><path d="M26.5 168.5 H30.5 M28.5 166.5 V170.5" stroke="#111"/><path d="M33 168.5 H38" stroke="#999" stroke-dasharray="1 1"/><g transform="translate(38,160)"><path d="M9 1 L14 4 L9 7 L4 4Z" fill="#8a7ae0"/><path d="M14 4 L17.5 8 L12.5 11 L9 7Z" fill="#e04848"/><path d="M4 4 L9 7 L6 11 L0.5 8Z" fill="#f0a020"/><path d="M9 7 L12.5 11 L9 15.5 L5.5 11Z" fill="#40b040"/></g><rect x="24.5" y="180.5" width="8" height="8" fill="#fff" stroke="#999"/><path d="M26.5 184.5 H30.5 M28.5 182.5 V186.5" stroke="#111"/><path d="M33 184.5 H38" stroke="#999" stroke-dasharray="1 1"/><g transform="translate(38,176)"><path d="M9 1 L14 4 L9 7 L4 4Z" fill="#8a7ae0"/><path d="M14 4 L17.5 8 L12.5 11 L9 7Z" fill="#e04848"/><path d="M4 4 L9 7 L6 11 L0.5 8Z" fill="#f0a020"/><path d="M9 7 L12.5 11 L9 15.5 L5.5 11Z" fill="#40b040"/></g><rect x="24.5" y="196.5" width="8" height="8" fill="#fff" stroke="#999"/><path d="M26.5 200.5 H30.5 M28.5 198.5 V202.5" stroke="#111"/><path d="M33 200.5 H38" stroke="#999" stroke-dasharray="1 1"/><g transform="translate(38,192)"><path d="M9 1 L14 4 L9 7 L4 4Z" fill="#8a7ae0"/><path d="M14 4 L17.5 8 L12.5 11 L9 7Z" fill="#e04848"/><path d="M4 4 L9 7 L6 11 L0.5 8Z" fill="#f0a020"/><path d="M9 7 L12.5 11 L9 15.5 L5.5 11Z" fill="#40b040"/></g><rect x="24.5" y="212.5" width="8" height="8" fill="#fff" stroke="#999"/><path d="M26.5 216.5 H30.5 M28.5 214.5 V218.5" stroke="#111"/><path d="M33 216.5 H38" stroke="#999" stroke-dasharray="1 1"/><g transform="translate(38,208)"><path d="M9 1 L14 4 L9 7 L4 4Z" fill="#8a7ae0"/><path d="M14 4 L17.5 8 L12.5 11 L9 7Z" fill="#e04848"/><path d="M4 4 L9 7 L6 11 L0.5 8Z" fill="#f0a020"/><path d="M9 7 L12.5 11 L9 15.5 L5.5 11Z" fill="#40b040"/></g><rect x="24.5" y="228.5" width="8" height="8" fill="#fff" stroke="#999"/><path d="M26.5 232.5 H30.5 M28.5 230.5 V234.5" stroke="#111"/><path d="M33 232.5 H38" stroke="#999" stroke-dasharray="1 1"/><g transform="translate(38,224)"><path d="M9 1 L14 4 L9 7 L4 4Z" fill="#8a7ae0"/><path d="M14 4 L17.5 8 L12.5 11 L9 7Z" fill="#e04848"/><path d="M4 4 L9 7 L6 11 L0.5 8Z" fill="#f0a020"/><path d="M9 7 L12.5 11 L9 15.5 L5.5 11Z" fill="#40b040"/></g><rect x="24.5" y="244.5" width="8" height="8" fill="#fff" stroke="#999"/><path d="M26.5 248.5 H30.5 M28.5 246.5 V250.5" stroke="#111"/><path d="M33 248.5 H38" stroke="#999" stroke-dasharray="1 1"/><g transform="translate(38,240)"><path d="M9 1 L14 4 L9 7 L4 4Z" fill="#8a7ae0"/><path d="M14 4 L17.5 8 L12.5 11 L9 7Z" fill="#e04848"/><path d="M4 4 L9 7 L6 11 L0.5 8Z" fill="#f0a020"/><path d="M9 7 L12.5 11 L9 15.5 L5.5 11Z" fill="#40b040"/></g><rect x="24.5" y="260.5" width="8" height="8" fill="#fff" stroke="#999"/><path d="M26.5 264.5 H30.5 M28.5 262.5 V266.5" stroke="#111"/><path d="M33 264.5 H38" stroke="#999" stroke-dasharray="1 1"/><g transform="translate(38,256)"><path d="M9 1 L14 4 L9 7 L4 4Z" fill="#8a7ae0"/><path d="M14 4 L17.5 8 L12.5 11 L9 7Z" fill="#e04848"/><path d="M4 4 L9 7 L6 11 L0.5 8Z" fill="#f0a020"/><path d="M9 7 L12.5 11 L9 15.5 L5.5 11Z" fill="#40b040"/></g><rect x="24.5" y="276.5" width="8" height="8" fill="#fff" stroke="#999"/><path d="M26.5 280.5 H30.5 M28.5 278.5 V282.5" stroke="#111"/><path d="M33 280.5 H38" stroke="#999" stroke-dasharray="1 1"/><g transform="translate(38,272)"><path d="M9 1 L14 4 L9 7 L4 4Z" fill="#8a7ae0"/><path d="M14 4 L17.5 8 L12.5 11 L9 7Z" fill="#e04848"/><path d="M4 4 L9 7 L6 11 L0.5 8Z" fill="#f0a020"/><path d="M9 7 L12.5 11 L9 15.5 L5.5 11Z" fill="#40b040"/></g><rect x="24.5" y="292.5" width="8" height="8" fill="#fff" stroke="#999"/><path d="M26.5 296.5 H30.5 M28.5 294.5 V298.5" stroke="#111"/><path d="M33 296.5 H38" stroke="#999" stroke-dasharray="1 1"/><g transform="translate(39,289)"><path d="M1 2 H15 M1 2 V8 H3 M4 0 V2 M8 0 V2 M12 0 V2" stroke="#111" fill="none"/><rect x="2" y="2" width="13" height="6" fill="#cfe0f8"/><path d="M1 2 H15 M4 0 V2 M8 0 V2 M12 0 V2" stroke="#111" fill="none"/><circle cx="5" cy="11" r="3" fill="none" stroke="#111" stroke-width="1.2"/><circle cx="11" cy="11" r="3" fill="none" stroke="#111" stroke-width="1.2"/></g><rect x="24.5" y="308.5" width="8" height="8" fill="#fff" stroke="#999"/><path d="M26.5 312.5 H30.5 M28.5 310.5 V314.5" stroke="#111"/><path d="M33 312.5 H38" stroke="#999" stroke-dasharray="1 1"/><g transform="translate(39,305)"><path d="M1 2 H15 M1 2 V8 H3 M4 0 V2 M8 0 V2 M12 0 V2" stroke="#111" fill="none"/><rect x="2" y="2" width="13" height="6" fill="#cfe0f8"/><path d="M1 2 H15 M4 0 V2 M8 0 V2 M12 0 V2" stroke="#111" fill="none"/><circle cx="5" cy="11" r="3" fill="none" stroke="#111" stroke-width="1.2"/><circle cx="11" cy="11" r="3" fill="none" stroke="#111" stroke-width="1.2"/></g><rect x="24.5" y="324.5" width="8" height="8" fill="#fff" stroke="#999"/><path d="M26.5 328.5 H30.5 M28.5 326.5 V330.5" stroke="#111"/><path d="M33 328.5 H38" stroke="#999" stroke-dasharray="1 1"/><g transform="translate(38,320)"><path d="M9 1 L14 4 L9 7 L4 4Z" fill="#8a7ae0"/><path d="M14 4 L17.5 8 L12.5 11 L9 7Z" fill="#e04848"/><path d="M4 4 L9 7 L6 11 L0.5 8Z" fill="#f0a020"/><path d="M9 7 L12.5 11 L9 15.5 L5.5 11Z" fill="#40b040"/></g></svg>
<div class="tr" style="left:1763px;top:213px;color:#d8ecff">L1</div>
<div class="tr" style="left:1798px;top:229px;font-size:10.2px">NSYS3D8630T</div>
<div class="tr" style="left:1798px;top:245px;font-size:10.2px">009213</div>
<div class="tr" style="left:1798px;top:261px;font-size:10.2px">009213</div>
<div class="tr" style="left:1798px;top:277px;font-size:10.2px">009213</div>
<div class="tr" style="left:1798px;top:293px;font-size:10.2px">AK2GD7575</div>
<div class="tr" style="left:1798px;top:309px;font-size:10.2px">AK2GD7575</div>
<div class="tr" style="left:1798px;top:325px;font-size:10.2px">AK2GD7575</div>
<div class="tr" style="left:1798px;top:341px;font-size:10.2px">AK2GD7575</div>
<div class="tr" style="left:1782px;top:357px;font-size:10.5px">K1</div>
<div class="tr" style="left:1782px;top:373px;font-size:10.5px">K2</div>
<div class="tr" style="left:1782px;top:389px;font-size:10.5px">K3</div>
<div class="tr" style="left:1782px;top:405px;font-size:10.5px">Q1</div>
<div class="tr" style="left:1782px;top:421px;font-size:10.5px">Q2</div>
<div class="tr" style="left:1782px;top:437px;font-size:10.5px">Q3</div>
<div class="tr" style="left:1782px;top:453px;font-size:10.5px">Q4</div>
<div class="tr" style="left:1782px;top:469px;font-size:10.5px">T1</div>
<div class="tr" style="left:1782px;top:485px;font-size:10.5px">VFD1</div>
<div class="tr" style="left:1782px;top:501px;font-size:10.5px">X1</div>
<div class="tr" style="left:1782px;top:517px;font-size:10.5px">X2</div>
<div class="tr" style="left:1782px;top:533px;font-size:10.5px">Y1</div>
<div class="a" style="left:1721px;top:997px;width:191px;height:9px;background:#eaeaea"></div>
<svg width="192" height="12" style="left:1720px;top:996px"><path d="M12 10 L7 10 L12 5Z" fill="#555"/><rect x="18.5" y="2.5" width="15" height="9" rx="2" fill="#f4f4f4" stroke="#a0a0a0"/><path d="M22.5 6 V10 M25.5 6 V10 M28.5 6 V10" stroke="#666"/><path d="M184 10 L189 10 L184 5Z" fill="#555"/></svg>
<div class="a" style="left:1721px;top:1014px;width:191px;height:2px;background:#ececec"></div>
</body></html>
